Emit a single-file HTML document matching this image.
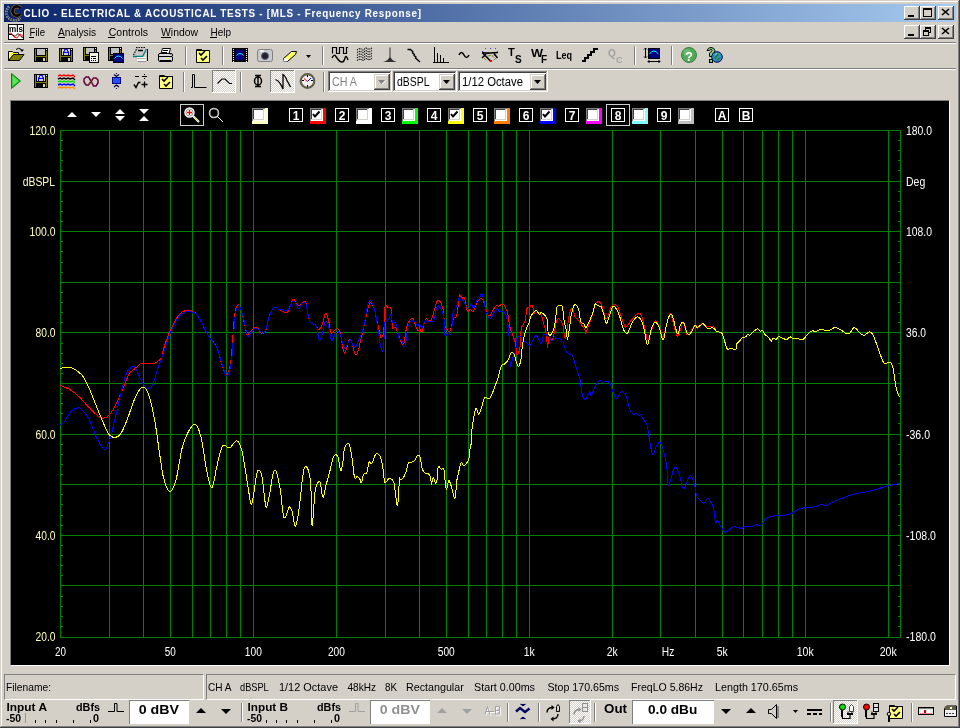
<!DOCTYPE html>
<html><head><meta charset="utf-8"><style>
*{margin:0;padding:0;box-sizing:border-box}
html,body{width:960px;height:728px;overflow:hidden;background:#d4d0c8;font-family:"Liberation Sans", sans-serif;font-size:11px;color:#000}
.a{position:absolute}
</style></head><body>
<div class="a" style="left:0px;top:0px;width:960px;height:728px;background:#d4d0c8;"></div><div class="a" style="left:1px;top:1px;width:957px;height:1px;background:#fff;"></div><div class="a" style="left:1px;top:1px;width:1px;height:725px;background:#fff;"></div><div class="a" style="left:958px;top:1px;width:1px;height:726px;background:#808080;"></div><div class="a" style="left:1px;top:726px;width:958px;height:1px;background:#808080;"></div><div class="a" style="left:959px;top:0px;width:1px;height:728px;background:#404040;"></div><div class="a" style="left:0px;top:727px;width:960px;height:1px;background:#404040;"></div><div class="a" style="left:4px;top:4px;width:952px;height:18px;background:linear-gradient(to right,#0a246a,#a6caf0);"></div><div class="a" style="left:4px;top:42px;width:952px;height:1px;background:#808080;"></div><div class="a" style="left:4px;top:43px;width:952px;height:1px;background:#fff;"></div><div class="a" style="left:4px;top:68px;width:952px;height:1px;background:#808080;"></div><div class="a" style="left:4px;top:69px;width:952px;height:1px;background:#fff;"></div><div class="a" style="left:10px;top:100px;width:940px;height:566px;background:#000;border-top:1px solid #808080;border-left:1px solid #808080;border-right:1px solid #fff;border-bottom:1px solid #fff"></div><div class="a" style="left:4px;top:674px;width:200px;height:26px;background:#d4d0c8;border-top:1px solid #808080;border-left:1px solid #808080;border-right:1px solid #fff;border-bottom:1px solid #fff"></div><div class="a" style="left:206px;top:674px;width:750px;height:26px;background:#d4d0c8;border-top:1px solid #808080;border-left:1px solid #808080;border-right:1px solid #fff;border-bottom:1px solid #fff"></div>
<svg width="960" height="728" style="position:absolute;left:0;top:0;will-change:transform">
<path d="M60.5 130V638M109.5 130V638M143.5 130V638M170.5 130V638M192.5 130V638M210.5 130V638M226.5 130V638M240.5 130V638M253.5 130V638M336.5 130V638M385.5 130V638M419.5 130V638M446.5 130V638M468.5 130V638M486.5 130V638M502.5 130V638M516.5 130V638M529.5 130V638M612.5 130V638M660.5 130V638M695.5 130V638M722.5 130V638M743.5 130V638M762.5 130V638M778.5 130V638M792.5 130V638M805.5 130V638M888.5 130V638M900.5 130V638M60 130.5H901M60 181.5H901M60 231.5H901M60 282.5H901M60 332.5H901M60 383.5H901M60 434.5H901M60 484.5H901M60 535.5H901M60 585.5H901M60 637.5H901M60 130.5h3M898 130.5h3M60 140.5h3M898 140.5h3M60 150.5h3M898 150.5h3M60 160.5h3M898 160.5h3M60 170.5h3M898 170.5h3M60 181.5h3M898 181.5h3M60 191.5h3M898 191.5h3M60 201.5h3M898 201.5h3M60 211.5h3M898 211.5h3M60 221.5h3M898 221.5h3M60 231.5h3M898 231.5h3M60 241.5h3M898 241.5h3M60 251.5h3M898 251.5h3M60 262.5h3M898 262.5h3M60 272.5h3M898 272.5h3M60 282.5h3M898 282.5h3M60 292.5h3M898 292.5h3M60 302.5h3M898 302.5h3M60 312.5h3M898 312.5h3M60 322.5h3M898 322.5h3M60 332.5h3M898 332.5h3M60 343.5h3M898 343.5h3M60 353.5h3M898 353.5h3M60 363.5h3M898 363.5h3M60 373.5h3M898 373.5h3M60 383.5h3M898 383.5h3M60 393.5h3M898 393.5h3M60 403.5h3M898 403.5h3M60 413.5h3M898 413.5h3M60 423.5h3M898 423.5h3M60 434.5h3M898 434.5h3M60 444.5h3M898 444.5h3M60 454.5h3M898 454.5h3M60 464.5h3M898 464.5h3M60 474.5h3M898 474.5h3M60 484.5h3M898 484.5h3M60 494.5h3M898 494.5h3M60 504.5h3M898 504.5h3M60 515.5h3M898 515.5h3M60 525.5h3M898 525.5h3M60 535.5h3M898 535.5h3M60 545.5h3M898 545.5h3M60 555.5h3M898 555.5h3M60 565.5h3M898 565.5h3M60 575.5h3M898 575.5h3M60 585.5h3M898 585.5h3M60 596.5h3M898 596.5h3M60 606.5h3M898 606.5h3M60 616.5h3M898 616.5h3M60 626.5h3M898 626.5h3" stroke="#008000" stroke-width="1" fill="none" shape-rendering="crispEdges"/>
<path d="M60.06 385.22C60.86 385.56 62.92 386.36 64.87 387.28C66.81 388.20 69.22 389.00 71.74 390.71C74.25 392.43 77.69 395.41 79.98 397.58C82.27 399.76 83.87 402.05 85.47 403.76C87.08 405.48 87.99 406.28 89.59 407.88C91.20 409.49 93.03 411.66 95.09 413.38C97.15 415.10 99.78 417.73 101.96 418.19C104.13 418.64 106.31 417.50 108.14 416.13C109.97 414.75 111.23 412.81 112.95 409.95C114.66 407.08 116.61 402.96 118.44 398.96C120.27 394.95 122.10 390.14 123.93 385.91C125.77 381.67 127.60 376.41 129.43 373.54C131.26 370.68 133.09 370.34 134.92 368.74C136.75 367.13 138.59 364.84 140.42 363.93C142.25 363.01 144.08 363.31 145.91 363.24C147.74 363.17 149.58 363.70 151.41 363.52C153.24 363.33 155.07 363.33 156.90 362.14C158.73 360.95 161.36 358.33 162.40 356.37C163.43 354.42 161.80 354.66 163.10 350.40C164.40 346.14 167.53 336.75 170.20 330.80C172.87 324.85 176.12 318.10 179.10 314.70C182.08 311.30 185.12 310.40 188.10 310.40C191.08 310.40 193.73 310.70 197.00 314.70C200.27 318.70 204.45 329.02 207.70 334.40C210.95 339.78 214.12 341.95 216.50 347.00C218.88 352.05 220.37 360.08 222.00 364.70C223.63 369.32 224.82 375.32 226.30 374.70C227.78 374.08 229.53 370.70 230.90 361.00C232.27 351.30 233.30 325.88 234.50 316.50C235.70 307.12 236.78 305.00 238.10 304.70C239.42 304.40 240.92 309.75 242.40 314.70C243.88 319.65 245.82 331.42 247.00 334.40C248.18 337.38 248.18 333.80 249.50 332.60C250.82 331.40 253.40 327.80 254.90 327.20C256.40 326.60 257.65 328.20 258.50 329.00C259.35 329.80 259.23 331.17 260.00 332.00C260.77 332.83 262.06 334.50 263.10 334.00C264.14 333.50 265.42 331.33 266.25 329.00C267.08 326.67 267.38 322.65 268.10 320.00C268.83 317.35 269.77 315.08 270.60 313.10C271.43 311.12 272.16 309.03 273.10 308.10C274.04 307.17 275.31 307.28 276.25 307.50C277.19 307.72 277.71 308.77 278.75 309.40C279.79 310.02 281.36 310.73 282.50 311.25C283.64 311.77 284.67 312.50 285.60 312.50C286.53 312.50 286.85 313.43 288.10 311.25C289.35 309.07 291.74 300.77 293.10 299.40C294.46 298.02 295.20 301.97 296.25 303.00C297.30 304.03 298.15 305.89 299.40 305.60C300.65 305.31 302.61 301.52 303.75 301.25C304.89 300.98 305.52 301.81 306.25 304.00C306.98 306.19 307.48 311.42 308.10 314.40C308.73 317.38 309.27 320.34 310.00 321.90C310.73 323.46 311.57 323.13 312.50 323.75C313.43 324.37 314.56 324.66 315.60 325.60C316.64 326.54 317.70 329.40 318.75 329.40C319.80 329.40 320.76 328.32 321.90 325.60C323.04 322.88 324.46 313.83 325.60 313.10C326.74 312.38 327.81 317.92 328.75 321.25C329.69 324.58 330.00 331.85 331.25 333.10C332.50 334.35 334.79 328.95 336.25 328.75C337.71 328.55 338.64 327.84 340.00 331.90C341.36 335.96 342.73 351.96 344.40 353.10C346.07 354.24 348.02 338.43 350.00 338.75C351.98 339.07 354.17 356.04 356.25 355.00C358.33 353.96 360.62 340.00 362.50 332.50C364.38 325.00 366.25 314.90 367.50 310.00C368.75 305.10 368.96 303.54 370.00 303.12C371.04 302.71 372.19 302.81 373.75 307.50C375.31 312.19 378.12 326.15 379.38 331.25C380.62 336.35 380.52 338.23 381.25 338.12C381.98 338.02 383.12 335.73 383.75 330.62C384.38 325.52 384.27 311.35 385.00 307.50C385.73 303.65 387.08 307.19 388.12 307.50C389.17 307.81 390.52 306.04 391.25 309.38C391.98 312.71 391.77 324.48 392.50 327.50C393.23 330.52 394.69 326.46 395.62 327.50C396.56 328.54 397.19 331.25 398.12 333.75C399.06 336.25 400.31 340.83 401.25 342.50C402.19 344.17 402.81 346.46 403.75 343.75C404.69 341.04 405.73 330.31 406.88 326.25C408.02 322.19 409.58 320.62 410.62 319.38C411.67 318.12 412.19 317.40 413.12 318.75C414.06 320.10 415.42 325.52 416.25 327.50C417.08 329.48 417.50 330.42 418.12 330.62C418.75 330.83 419.38 328.54 420.00 328.75C420.62 328.96 420.94 333.44 421.88 331.88C422.81 330.31 424.48 321.25 425.62 319.38C426.77 317.50 427.71 320.73 428.75 320.62C429.79 320.52 430.42 322.08 431.88 318.75C433.33 315.42 435.73 302.60 437.50 300.62C439.27 298.65 441.35 303.44 442.50 306.88C443.65 310.31 443.85 317.81 444.38 321.25C444.90 324.69 444.69 325.83 445.62 327.50C446.56 329.17 448.75 332.60 450.00 331.25C451.25 329.90 451.98 322.08 453.12 319.38C454.27 316.67 455.83 318.96 456.88 315.00C457.92 311.04 458.54 298.44 459.38 295.62C460.21 292.81 461.04 297.71 461.88 298.12C462.71 298.54 463.44 295.94 464.38 298.12C465.31 300.31 466.56 309.38 467.50 311.25C468.44 313.12 469.06 309.38 470.00 309.38C470.94 309.38 471.98 312.40 473.12 311.25C474.27 310.10 475.83 304.48 476.88 302.50C477.92 300.52 478.85 300.10 479.38 299.38C479.90 298.65 479.48 298.12 480.00 298.12C480.52 298.12 481.56 297.81 482.50 299.38C483.44 300.94 484.90 305.21 485.62 307.50C486.35 309.79 486.15 311.77 486.88 313.12C487.60 314.48 488.96 316.15 490.00 315.62C491.04 315.10 492.08 311.67 493.12 310.00C494.17 308.33 495.31 306.25 496.25 305.62C497.19 305.00 497.92 306.46 498.75 306.25C499.58 306.04 500.42 304.62 501.25 304.38C502.08 304.12 502.81 303.71 503.75 304.75C504.69 305.79 506.15 308.81 506.88 310.62C507.60 312.44 507.60 312.81 508.12 315.62C508.65 318.44 509.27 324.38 510.00 327.50C510.73 330.62 511.56 331.67 512.50 334.38C513.44 337.08 514.90 340.31 515.62 343.75C516.35 347.19 516.15 354.38 516.88 355.00C517.60 355.62 519.27 351.88 520.00 347.50C520.73 343.12 520.42 333.12 521.25 328.75C522.08 324.38 524.06 324.58 525.00 321.25C525.94 317.92 526.15 311.15 526.88 308.75C527.60 306.35 528.44 307.40 529.38 306.88C530.31 306.35 531.77 304.58 532.50 305.62C533.23 306.67 533.12 312.29 533.75 313.12C534.38 313.96 535.42 310.52 536.25 310.62C537.08 310.73 537.92 313.02 538.75 313.75C539.58 314.48 540.42 313.33 541.25 315.00C542.08 316.67 542.92 320.73 543.75 323.75C544.58 326.77 545.62 329.17 546.25 333.12C546.88 337.08 547.08 346.77 547.50 347.50C547.92 348.23 548.33 339.06 548.75 337.50C549.17 335.94 549.38 337.71 550.00 338.12C550.62 338.54 551.67 341.56 552.50 340.00C553.33 338.44 554.27 332.08 555.00 328.75C555.73 325.42 556.15 321.56 556.88 320.00C557.60 318.44 558.44 318.75 559.38 319.38C560.31 320.00 561.56 320.62 562.50 323.75C563.44 326.88 564.27 336.88 565.00 338.12C565.73 339.38 566.15 335.31 566.88 331.25C567.60 327.19 568.44 317.50 569.38 313.75C570.31 310.00 571.56 308.23 572.50 308.75C573.44 309.27 574.17 315.10 575.00 316.88C575.83 318.65 576.67 318.44 577.50 319.38C578.33 320.31 578.75 320.73 580.00 322.50C581.25 324.27 584.06 328.12 585.00 330.00C585.94 331.88 585.00 334.58 585.62 333.75C586.25 332.92 587.60 328.12 588.75 325.00C589.90 321.88 591.35 318.54 592.50 315.00C593.65 311.46 594.48 305.94 595.62 303.75C596.77 301.56 598.33 301.56 599.38 301.88C600.42 302.19 600.73 302.81 601.88 305.62C603.02 308.44 604.69 318.54 606.25 318.75C607.81 318.96 609.79 309.27 611.25 306.88C612.71 304.48 613.85 304.27 615.00 304.38C616.15 304.48 616.67 304.27 618.12 307.50C619.58 310.73 622.40 320.52 623.75 323.75C625.10 326.98 624.79 327.71 626.25 326.88C627.71 326.04 630.42 321.04 632.50 318.75C634.58 316.46 637.19 313.44 638.75 313.12C640.31 312.81 640.83 314.27 641.88 316.88C642.92 319.48 643.96 325.00 645.00 328.75C646.04 332.50 646.46 340.62 648.12 339.38C649.79 338.12 653.02 323.02 655.00 321.25C656.98 319.48 658.65 326.15 660.00 328.75C661.35 331.35 661.67 338.85 663.12 336.88C664.58 334.90 667.40 320.42 668.75 316.88C670.10 313.33 669.79 312.40 671.25 315.62C672.71 318.85 675.52 335.10 677.50 336.25C679.48 337.40 681.46 322.71 683.12 322.50C684.79 322.29 685.52 334.58 687.50 335.00C689.48 335.42 693.33 326.15 695.00 325.00C696.67 323.85 696.25 328.44 697.50 328.12C698.75 327.81 700.83 323.33 702.50 323.12C704.17 322.92 705.83 326.35 707.50 326.88C709.17 327.40 711.25 326.04 712.50 326.25C713.75 326.46 714.38 327.29 715.00 328.12C715.62 328.96 715.83 330.62 716.25 331.25C716.67 331.88 716.67 331.67 717.50 331.88C718.33 332.08 720.31 331.77 721.25 332.50C722.19 333.23 722.50 334.58 723.12 336.25C723.75 337.92 724.27 340.31 725.00 342.50C725.73 344.69 726.56 348.44 727.50 349.38C728.44 350.31 729.27 348.12 730.62 348.12C731.98 348.12 734.58 350.10 735.62 349.38C736.67 348.65 736.25 345.10 736.88 343.75C737.50 342.40 738.44 342.29 739.38 341.25C740.31 340.21 741.46 338.23 742.50 337.50C743.54 336.77 744.79 337.40 745.62 336.88C746.46 336.35 746.77 334.69 747.50 334.38C748.23 334.06 749.06 335.42 750.00 335.00C750.94 334.58 751.88 332.92 753.12 331.88C754.38 330.83 756.35 328.85 757.50 328.75C758.65 328.65 759.17 330.94 760.00 331.25C760.83 331.56 761.67 330.10 762.50 330.62C763.33 331.15 763.96 333.23 765.00 334.38C766.04 335.52 767.71 336.35 768.75 337.50C769.79 338.65 770.52 341.15 771.25 341.25C771.98 341.35 772.29 338.44 773.12 338.12C773.96 337.81 775.31 339.69 776.25 339.38C777.19 339.06 777.81 336.46 778.75 336.25C779.69 336.04 780.52 337.60 781.88 338.12C783.23 338.65 785.52 339.58 786.88 339.38C788.23 339.17 789.06 337.08 790.00 336.88C790.94 336.67 791.25 337.92 792.50 338.12C793.75 338.33 796.35 337.92 797.50 338.12C798.65 338.33 798.44 339.17 799.38 339.38C800.31 339.58 802.08 339.79 803.12 339.38C804.17 338.96 804.90 337.71 805.62 336.88C806.35 336.04 806.35 335.42 807.50 334.38C808.65 333.33 811.25 331.04 812.50 330.62C813.75 330.21 813.96 331.98 815.00 331.88C816.04 331.77 817.71 330.42 818.75 330.00C819.79 329.58 820.42 329.38 821.25 329.38C822.08 329.38 822.29 329.90 823.75 330.00C825.21 330.10 828.12 330.42 830.00 330.00C831.88 329.58 833.17 327.50 835.00 327.50C836.83 327.50 839.10 328.98 841.00 330.00C842.90 331.02 844.90 333.12 846.40 333.60C847.90 334.08 848.68 333.92 850.00 332.90C851.32 331.88 852.82 327.68 854.30 327.50C855.78 327.32 857.35 330.48 858.90 331.80C860.45 333.12 861.82 335.40 863.60 335.40C865.38 335.40 868.00 331.80 869.60 331.80C871.20 331.80 871.70 332.43 873.20 335.40C874.70 338.37 876.82 345.02 878.60 349.60C880.38 354.18 882.00 360.82 883.90 362.90C885.80 364.98 888.50 361.33 890.00 362.10C891.50 362.87 891.95 363.62 892.90 367.50C893.85 371.38 894.82 380.93 895.70 385.40C896.58 389.87 897.48 392.37 898.20 394.30C898.92 396.23 899.70 396.55 900.00 397.00" stroke="#ff0000" stroke-width="1" fill="none" shape-rendering="crispEdges"/>
<path d="M60.06 425.05C60.86 424.37 63.04 423.22 64.87 420.93C66.70 418.64 68.99 413.49 71.05 411.32C73.11 409.14 75.63 408.34 77.23 407.88C78.83 407.43 79.06 407.31 80.66 408.57C82.27 409.83 85.01 412.69 86.85 415.44C88.68 418.19 90.05 421.39 91.65 425.05C93.26 428.72 94.40 433.41 96.46 437.42C98.52 441.42 102.18 447.72 104.02 449.09C105.85 450.47 106.19 448.29 107.45 445.66C108.71 443.03 109.97 439.25 111.57 433.30C113.17 427.34 115.23 417.73 117.07 409.95C118.90 402.16 120.96 392.77 122.56 386.59C124.16 380.41 125.08 376.18 126.68 372.86C128.28 369.54 130.69 367.36 132.18 366.68C133.66 365.99 133.78 365.87 135.61 368.74C137.44 371.60 140.99 380.53 143.16 383.85C145.34 387.17 147.06 388.54 148.66 388.65C150.26 388.77 151.41 387.39 152.78 384.53C154.15 381.67 155.30 376.29 156.90 371.48C158.50 366.68 160.10 362.30 162.40 355.69C164.70 349.07 167.83 338.46 170.70 331.80C173.57 325.14 176.62 319.10 179.60 315.70C182.58 312.30 185.62 311.40 188.60 311.40C191.58 311.40 194.23 311.70 197.50 315.70C200.77 319.70 204.95 330.02 208.20 335.40C211.45 340.78 214.62 342.95 217.00 348.00C219.38 353.05 220.87 361.08 222.50 365.70C224.13 370.32 225.32 376.32 226.80 375.70C228.28 375.08 230.03 371.70 231.40 362.00C232.77 352.30 233.80 326.88 235.00 317.50C236.20 308.12 237.28 306.00 238.60 305.70C239.92 305.40 241.42 310.75 242.90 315.70C244.38 320.65 246.32 332.42 247.50 335.40C248.68 338.38 248.68 334.80 250.00 333.60C251.32 332.40 253.90 328.80 255.40 328.20C256.90 327.60 258.23 329.49 259.00 330.00C259.77 330.51 259.31 330.73 260.00 331.25C260.69 331.77 262.08 333.54 263.12 333.12C264.17 332.71 265.42 330.94 266.25 328.75C267.08 326.56 267.40 322.60 268.12 320.00C268.85 317.40 269.79 315.10 270.62 313.12C271.46 311.15 272.19 309.06 273.12 308.12C274.06 307.19 275.31 307.29 276.25 307.50C277.19 307.71 277.71 309.06 278.75 309.38C279.79 309.69 281.25 309.17 282.50 309.38C283.75 309.58 285.10 310.83 286.25 310.62C287.40 310.42 288.23 309.79 289.38 308.12C290.52 306.46 291.98 301.25 293.12 300.62C294.27 300.00 295.31 303.02 296.25 304.38C297.19 305.73 297.81 308.85 298.75 308.75C299.69 308.65 300.94 304.79 301.88 303.75C302.81 302.71 303.65 302.29 304.38 302.50C305.10 302.71 305.62 303.02 306.25 305.00C306.88 306.98 307.50 311.56 308.12 314.38C308.75 317.19 309.27 320.31 310.00 321.88C310.73 323.44 311.56 323.23 312.50 323.75C313.44 324.27 314.79 323.96 315.62 325.00C316.46 326.04 316.88 327.50 317.50 330.00C318.12 332.50 318.65 339.06 319.38 340.00C320.10 340.94 320.94 338.54 321.88 335.62C322.81 332.71 323.96 324.38 325.00 322.50C326.04 320.62 327.08 321.46 328.12 324.38C329.17 327.29 330.31 337.92 331.25 340.00C332.19 342.08 332.81 338.23 333.75 336.88C334.69 335.52 335.83 332.40 336.88 331.88C337.92 331.35 339.06 331.98 340.00 333.75C340.94 335.52 341.67 340.00 342.50 342.50C343.33 345.00 344.06 348.75 345.00 348.75C345.94 348.75 347.19 343.96 348.12 342.50C349.06 341.04 349.69 339.27 350.62 340.00C351.56 340.73 352.81 345.83 353.75 346.88C354.69 347.92 355.42 347.50 356.25 346.25C357.08 345.00 357.81 341.56 358.75 339.38C359.69 337.19 360.83 336.35 361.88 333.12C362.92 329.90 364.06 324.48 365.00 320.00C365.94 315.52 366.67 309.48 367.50 306.25C368.33 303.02 369.17 301.04 370.00 300.62C370.83 300.21 371.56 301.56 372.50 303.75C373.44 305.94 374.90 310.62 375.62 313.75C376.35 316.88 376.25 318.33 376.88 322.50C377.50 326.67 378.75 334.79 379.38 338.75C380.00 342.71 380.10 344.17 380.62 346.25C381.15 348.33 381.98 351.67 382.50 351.25C383.02 350.83 383.33 348.54 383.75 343.75C384.17 338.96 384.48 326.25 385.00 322.50C385.52 318.75 386.15 322.08 386.88 321.25C387.60 320.42 388.65 318.65 389.38 317.50C390.10 316.35 390.73 313.54 391.25 314.38C391.77 315.21 391.77 321.04 392.50 322.50C393.23 323.96 394.79 321.88 395.62 323.12C396.46 324.38 396.98 327.60 397.50 330.00C398.02 332.40 398.02 335.62 398.75 337.50C399.48 339.38 400.94 339.69 401.88 341.25C402.81 342.81 403.65 347.08 404.38 346.88C405.10 346.67 405.73 343.12 406.25 340.00C406.77 336.88 406.88 331.15 407.50 328.12C408.12 325.10 409.17 323.23 410.00 321.88C410.83 320.52 411.67 320.00 412.50 320.00C413.33 320.00 414.17 320.83 415.00 321.88C415.83 322.92 416.77 325.94 417.50 326.25C418.23 326.56 418.65 323.44 419.38 323.75C420.10 324.06 420.94 328.54 421.88 328.12C422.81 327.71 423.96 322.40 425.00 321.25C426.04 320.10 426.67 321.35 428.12 321.25C429.58 321.15 432.29 323.02 433.75 320.62C435.21 318.23 435.73 308.96 436.88 306.88C438.02 304.79 439.48 306.56 440.62 308.12C441.77 309.69 443.02 311.77 443.75 316.25C444.48 320.73 444.27 332.29 445.00 335.00C445.73 337.71 447.08 332.81 448.12 332.50C449.17 332.19 450.42 336.46 451.25 333.12C452.08 329.79 452.29 316.77 453.12 312.50C453.96 308.23 455.21 310.00 456.25 307.50C457.29 305.00 458.23 298.65 459.38 297.50C460.52 296.35 461.98 299.17 463.12 300.62C464.27 302.08 465.31 304.90 466.25 306.25C467.19 307.60 467.92 309.17 468.75 308.75C469.58 308.33 470.42 303.85 471.25 303.75C472.08 303.65 472.81 308.65 473.75 308.12C474.69 307.60 475.94 302.19 476.88 300.62C477.81 299.06 478.65 299.90 479.38 298.75C480.10 297.60 480.52 293.65 481.25 293.75C481.98 293.85 482.92 296.25 483.75 299.38C484.58 302.50 485.10 309.38 486.25 312.50C487.40 315.62 489.27 318.23 490.62 318.12C491.98 318.02 493.23 313.44 494.38 311.88C495.52 310.31 496.77 308.85 497.50 308.75C498.23 308.65 497.92 310.73 498.75 311.25C499.58 311.77 501.25 311.15 502.50 311.88C503.75 312.60 505.21 312.40 506.25 315.62C507.29 318.85 508.23 325.52 508.75 331.25C509.27 336.98 509.06 344.17 509.38 350.00C509.69 355.83 510.00 365.21 510.62 366.25C511.25 367.29 512.29 358.75 513.12 356.25C513.96 353.75 515.00 354.17 515.62 351.25C516.25 348.33 516.25 341.25 516.88 338.75C517.50 336.25 518.65 336.46 519.38 336.25C520.10 336.04 520.73 336.46 521.25 337.50C521.77 338.54 521.88 341.88 522.50 342.50C523.12 343.12 524.27 341.15 525.00 341.25C525.73 341.35 526.04 342.40 526.88 343.12C527.71 343.85 529.06 345.94 530.00 345.62C530.94 345.31 531.56 342.92 532.50 341.25C533.44 339.58 534.69 336.15 535.62 335.62C536.56 335.10 537.19 336.77 538.12 338.12C539.06 339.48 540.31 344.38 541.25 343.75C542.19 343.12 543.02 335.73 543.75 334.38C544.48 333.02 544.90 335.73 545.62 335.62C546.35 335.52 547.29 333.12 548.12 333.75C548.96 334.38 549.90 338.23 550.62 339.38C551.35 340.52 551.88 341.04 552.50 340.62C553.12 340.21 553.75 337.19 554.38 336.88C555.00 336.56 555.31 338.44 556.25 338.75C557.19 339.06 558.85 338.12 560.00 338.75C561.15 339.38 562.08 340.42 563.12 342.50C564.17 344.58 565.31 349.38 566.25 351.25C567.19 353.12 567.71 353.02 568.75 353.75C569.79 354.48 571.46 353.96 572.50 355.62C573.54 357.29 573.96 360.52 575.00 363.75C576.04 366.98 577.92 372.40 578.75 375.00C579.58 377.60 579.70 377.85 580.00 379.38C580.30 380.90 580.10 381.36 580.57 384.17C581.05 386.98 581.96 393.74 582.84 396.25C583.72 398.77 584.73 400.03 585.86 399.27C586.99 398.52 588.76 392.35 589.64 391.72C590.52 391.09 590.27 396.25 591.15 395.50C592.03 394.74 593.54 389.71 594.92 387.19C596.31 384.67 598.20 381.15 599.46 380.39C600.72 379.64 601.34 382.53 602.48 382.66C603.61 382.78 604.99 381.02 606.25 381.15C607.51 381.27 608.90 381.65 610.03 383.41C611.16 385.18 612.04 389.20 613.05 391.72C614.06 394.24 614.81 398.39 616.07 398.52C617.33 398.65 619.35 393.48 620.60 392.48C621.86 391.47 622.62 391.60 623.63 392.48C624.63 393.36 625.64 394.99 626.65 397.76C627.65 400.53 628.53 406.32 629.67 409.09C630.80 411.86 632.31 413.63 633.44 414.38C634.58 415.14 635.58 413.37 636.47 413.63C637.35 413.88 637.98 415.64 638.73 415.89C639.49 416.14 640.12 414.38 641.00 415.14C641.88 415.89 643.01 418.79 644.02 420.42C645.03 422.06 646.28 422.69 647.04 424.95C647.79 427.22 647.92 430.24 648.55 434.02C649.18 437.79 650.06 444.09 650.82 447.61C651.57 451.14 652.20 455.29 653.08 455.17C653.96 455.04 655.10 449.00 656.10 446.86C657.11 444.72 658.24 442.70 659.12 442.33C660.01 441.95 660.51 442.58 661.39 444.59C662.27 446.61 663.53 450.89 664.41 454.41C665.29 457.94 665.98 460.58 666.68 465.74C667.37 470.91 667.28 485.11 668.60 485.40C669.92 485.69 672.82 469.30 674.60 467.50C676.38 465.70 677.80 471.02 679.30 474.60C680.80 478.18 681.82 488.82 683.60 489.00C685.38 489.18 688.21 476.54 690.00 475.70C691.79 474.86 693.27 480.75 694.34 483.96C695.41 487.16 695.60 492.43 696.40 494.95C697.20 497.46 697.89 497.69 699.15 499.07C700.41 500.44 702.70 503.19 703.96 503.19C705.22 503.19 705.79 499.64 706.70 499.07C707.62 498.49 708.31 498.15 709.45 499.75C710.60 501.36 712.54 504.79 713.57 508.68C714.60 512.57 715.06 521.16 715.63 523.10C716.20 525.05 715.98 519.56 717.01 520.36C718.04 521.16 720.55 525.97 721.81 527.91C723.07 529.86 723.42 531.58 724.56 532.03C725.71 532.49 727.19 531.58 728.68 530.66C730.17 529.74 732.12 527.11 733.49 526.54C734.86 525.97 735.66 526.88 736.92 527.23C738.18 527.57 739.67 528.71 741.04 528.60C742.42 528.48 743.33 526.93 745.16 526.54C747.00 526.15 750.20 526.61 752.03 526.26C753.86 525.92 754.89 524.62 756.15 524.48C757.41 524.34 758.56 525.55 759.59 525.44C760.62 525.33 761.30 524.94 762.34 523.79C763.37 522.65 764.28 519.78 765.77 518.57C767.26 517.36 769.20 517.06 771.26 516.51C773.32 515.96 776.68 515.41 778.13 515.27C779.59 515.14 777.91 515.93 780.00 515.70C782.09 515.47 787.37 515.08 790.70 513.90C794.03 512.72 796.07 509.78 800.00 508.60C803.93 507.42 810.73 507.52 814.30 506.80C817.87 506.08 819.62 504.48 821.40 504.30C823.18 504.12 822.62 506.30 825.00 505.70C827.38 505.10 830.93 502.60 835.70 500.70C840.47 498.80 847.65 495.97 853.60 494.30C859.55 492.63 865.45 492.18 871.40 490.70C877.35 489.22 884.53 486.58 889.30 485.40C894.07 484.22 898.22 483.90 900.00 483.60" stroke="#0000ff" stroke-width="1" fill="none" shape-rendering="crispEdges"/>
<path d="M60.06 368.32C61.09 368.16 64.18 367.41 66.24 367.36C68.30 367.32 70.36 367.25 72.42 368.05C74.48 368.85 76.77 370.68 78.60 372.17C80.44 373.66 81.58 374.12 83.41 376.98C85.24 379.84 87.65 384.99 89.59 389.34C91.54 393.69 93.03 398.04 95.09 403.08C97.15 408.11 99.78 414.52 101.96 419.56C104.13 424.60 106.08 430.32 108.14 433.30C110.20 436.27 112.26 437.30 114.32 437.42C116.38 437.53 118.44 436.73 120.50 433.98C122.56 431.24 124.51 426.31 126.68 420.93C128.86 415.55 131.37 406.97 133.55 401.70C135.72 396.44 138.13 391.74 139.73 389.34C141.33 386.94 142.02 387.17 143.16 387.28C144.31 387.39 145.45 388.08 146.60 390.03C147.74 391.97 148.66 393.80 150.03 398.96C151.41 404.11 153.24 411.78 154.84 420.93C156.44 430.09 158.19 444.39 159.65 453.90C161.11 463.41 161.94 471.75 163.60 478.00C165.26 484.25 167.53 491.07 169.60 491.40C171.67 491.73 173.73 487.90 176.00 480.00C178.27 472.10 180.20 453.23 183.20 444.00C186.20 434.77 191.03 425.77 194.00 424.60C196.97 423.43 198.93 429.60 201.00 437.00C203.07 444.40 204.60 460.52 206.40 469.00C208.20 477.48 210.03 488.45 211.80 487.90C213.57 487.35 215.22 472.68 217.00 465.70C218.78 458.72 220.40 448.97 222.50 446.00C224.60 443.03 227.22 448.78 229.60 447.90C231.98 447.02 234.73 440.18 236.80 440.70C238.87 441.22 240.22 443.85 242.00 451.00C243.78 458.15 246.00 474.77 247.50 483.60C249.00 492.43 249.98 502.22 251.00 504.00C252.02 505.78 252.60 499.48 253.60 494.30C254.60 489.12 255.93 476.78 257.00 472.90C258.07 469.02 259.08 469.82 260.00 471.00C260.92 472.18 261.50 474.03 262.50 480.00C263.50 485.97 264.82 504.42 266.00 506.80C267.18 509.18 268.40 499.95 269.60 494.30C270.80 488.65 272.00 476.47 273.20 472.90C274.40 469.33 275.60 469.93 276.80 472.90C278.00 475.87 279.20 483.27 280.40 490.70C281.60 498.13 282.52 514.82 284.00 517.50C285.48 520.18 288.30 508.45 289.30 506.80C290.30 505.15 289.54 506.90 290.00 507.61C290.46 508.32 291.26 508.07 292.06 511.04C292.86 514.02 294.01 523.64 294.81 525.47C295.61 527.30 296.07 525.58 296.87 522.03C297.67 518.48 298.70 511.27 299.62 504.18C300.53 497.08 301.56 485.52 302.36 479.45C303.16 473.38 303.62 469.72 304.42 467.77C305.22 465.83 306.37 466.74 307.17 467.77C307.97 468.80 308.66 471.32 309.23 473.96C309.80 476.59 310.26 479.68 310.60 483.57C310.95 487.46 311.06 490.44 311.29 497.31C311.52 504.18 311.63 522.03 311.98 524.78C312.32 527.53 312.89 518.83 313.35 513.79C313.81 508.75 314.27 499.14 314.73 494.56C315.18 489.98 315.53 488.38 316.10 486.32C316.67 484.26 317.47 482.77 318.16 482.20C318.85 481.63 319.42 480.37 320.22 482.88C321.02 485.40 322.05 496.74 322.97 497.31C323.88 497.88 324.57 490.67 325.71 486.32C326.86 481.97 328.69 475.67 329.84 471.21C330.98 466.74 331.67 462.28 332.58 459.53C333.50 456.79 334.41 455.07 335.33 454.73C336.25 454.38 337.16 454.84 338.08 457.47C338.99 460.11 340.02 469.84 340.82 470.52C341.63 471.21 342.31 465.03 342.88 461.59C343.46 458.16 343.57 452.89 344.26 449.92C344.95 446.94 346.09 444.42 347.01 443.74C347.92 443.05 348.84 442.82 349.75 445.80C350.67 448.77 351.70 456.33 352.50 461.59C353.30 466.86 353.76 474.87 354.56 477.39C355.36 479.91 356.39 476.36 357.31 476.70C358.22 477.05 359.37 478.42 360.05 479.45C360.74 480.48 360.86 483.69 361.43 482.88C362.00 482.08 362.57 476.36 363.49 474.64C364.40 472.93 366.01 474.64 366.92 472.58C367.84 470.52 368.18 463.77 368.98 462.28C369.78 460.79 370.59 465.03 371.73 463.65C372.88 462.28 374.48 455.30 375.85 454.04C377.23 452.78 378.83 454.04 379.97 456.10C381.12 458.16 381.92 462.05 382.72 466.40C383.52 470.75 383.75 480.14 384.78 482.20C385.81 484.26 387.41 478.76 388.90 478.76C390.39 478.76 392.45 478.42 393.71 482.20C394.97 485.98 395.77 497.77 396.46 501.43C397.14 505.09 397.34 507.84 397.83 504.18C398.32 500.51 399.05 483.57 399.40 479.45C399.74 475.33 399.36 479.57 399.89 479.45C400.42 479.34 401.54 480.02 402.55 478.76C403.57 477.50 405.07 474.41 405.99 471.90C406.90 469.38 407.25 465.26 408.05 463.65C408.85 462.05 409.77 462.74 410.80 462.28C411.83 461.82 413.09 462.05 414.23 460.91C415.38 459.76 416.63 455.87 417.66 455.41C418.70 454.95 419.73 456.10 420.41 458.16C421.10 460.22 420.98 465.26 421.79 467.77C422.59 470.29 424.08 472.24 425.22 473.27C426.36 474.30 427.74 473.15 428.65 473.96C429.57 474.76 430.26 476.25 430.71 478.08C431.17 479.91 430.99 485.06 431.40 484.95C431.81 484.83 432.50 477.73 433.19 477.39C433.87 477.05 434.90 482.31 435.52 482.88C436.14 483.46 436.44 483.46 436.90 480.82C437.35 478.19 437.58 469.03 438.27 467.09C438.96 465.14 440.10 468.80 441.02 469.15C441.93 469.49 443.08 467.20 443.76 469.15C444.45 471.09 444.68 477.39 445.14 480.82C445.60 484.26 445.94 489.75 446.51 489.75C447.08 489.75 447.88 481.74 448.57 480.82C449.26 479.91 449.95 482.43 450.63 484.26C451.32 486.09 451.94 489.52 452.69 491.81C453.45 494.10 454.48 499.83 455.16 497.99C455.85 496.16 456.31 484.72 456.81 480.82C457.32 476.93 457.50 477.62 458.19 474.64C458.87 471.67 460.02 464.46 460.93 462.97C461.85 461.48 462.77 465.60 463.68 465.71C464.60 465.83 465.51 465.03 466.43 463.65C467.34 462.28 468.60 459.76 469.18 457.47C469.75 455.18 469.52 452.32 469.86 449.92C470.21 447.51 470.89 446.37 471.24 443.05C471.58 439.73 471.18 435.74 471.92 430.00C472.67 424.26 474.47 411.27 475.70 408.60C476.93 405.93 477.82 415.78 479.30 414.00C480.78 412.22 482.82 400.58 484.60 397.90C486.38 395.22 487.85 400.99 490.00 397.90C492.15 394.81 495.62 384.65 497.50 379.38C499.38 374.10 500.00 368.85 501.25 366.25C502.50 363.65 503.75 365.00 505.00 363.75C506.25 362.50 507.71 360.62 508.75 358.75C509.79 356.88 510.42 353.33 511.25 352.50C512.08 351.67 513.02 352.60 513.75 353.75C514.48 354.90 514.90 357.29 515.62 359.38C516.35 361.46 517.29 365.94 518.12 366.25C518.96 366.56 520.00 363.96 520.62 361.25C521.25 358.54 521.46 353.33 521.88 350.00C522.29 346.67 522.40 344.79 523.12 341.25C523.85 337.71 525.31 331.67 526.25 328.75C527.19 325.83 527.92 325.94 528.75 323.75C529.58 321.56 530.00 317.81 531.25 315.62C532.50 313.44 534.90 310.83 536.25 310.62C537.60 310.42 538.54 314.06 539.38 314.38C540.21 314.69 540.21 312.19 541.25 312.50C542.29 312.81 544.58 314.79 545.62 316.25C546.67 317.71 547.08 318.54 547.50 321.25C547.92 323.96 547.60 330.21 548.12 332.50C548.65 334.79 549.69 335.62 550.62 335.00C551.56 334.38 552.92 331.46 553.75 328.75C554.58 326.04 555.10 322.29 555.62 318.75C556.15 315.21 556.15 309.75 556.88 307.50C557.60 305.25 559.06 305.25 560.00 305.25C560.94 305.25 561.77 304.62 562.50 307.50C563.23 310.38 563.75 318.75 564.38 322.50C565.00 326.25 565.73 327.19 566.25 330.00C566.77 332.81 566.98 339.58 567.50 339.38C568.02 339.17 568.75 332.81 569.38 328.75C570.00 324.69 570.42 318.96 571.25 315.00C572.08 311.04 573.12 305.94 574.38 305.00C575.62 304.06 577.71 306.67 578.75 309.38C579.79 312.08 579.79 318.85 580.62 321.25C581.46 323.65 582.92 322.71 583.75 323.75C584.58 324.79 585.00 327.29 585.62 327.50C586.25 327.71 586.35 327.29 587.50 325.00C588.65 322.71 591.25 317.19 592.50 313.75C593.75 310.31 594.06 305.73 595.00 304.38C595.94 303.02 597.29 305.31 598.12 305.62C598.96 305.94 599.48 306.04 600.00 306.25C600.52 306.46 600.62 305.52 601.25 306.88C601.88 308.23 602.92 311.67 603.75 314.38C604.58 317.08 605.42 322.60 606.25 323.12C607.08 323.65 607.92 319.69 608.75 317.50C609.58 315.31 610.52 311.88 611.25 310.00C611.98 308.12 612.29 306.46 613.12 306.25C613.96 306.04 615.10 306.88 616.25 308.75C617.40 310.62 618.75 313.96 620.00 317.50C621.25 321.04 622.50 327.40 623.75 330.00C625.00 332.60 626.25 334.06 627.50 333.12C628.75 332.19 630.21 326.56 631.25 324.38C632.29 322.19 632.71 321.25 633.75 320.00C634.79 318.75 636.35 316.98 637.50 316.88C638.65 316.77 639.58 317.60 640.62 319.38C641.67 321.15 642.60 323.23 643.75 327.50C644.90 331.77 646.25 344.79 647.50 345.00C648.75 345.21 650.00 332.50 651.25 328.75C652.50 325.00 653.75 322.92 655.00 322.50C656.25 322.08 657.40 323.33 658.75 326.25C660.10 329.17 661.88 340.00 663.12 340.00C664.38 340.00 665.21 330.31 666.25 326.25C667.29 322.19 668.33 317.29 669.38 315.62C670.42 313.96 671.15 313.23 672.50 316.25C673.85 319.27 676.15 332.40 677.50 333.75C678.85 335.10 679.58 326.15 680.62 324.38C681.67 322.60 682.60 321.56 683.75 323.12C684.90 324.69 686.35 332.08 687.50 333.75C688.65 335.42 689.38 334.48 690.62 333.12C691.88 331.77 693.85 326.56 695.00 325.62C696.15 324.69 696.15 327.81 697.50 327.50C698.85 327.19 701.56 323.65 703.12 323.75C704.69 323.85 705.73 327.40 706.88 328.12C708.02 328.85 708.85 328.12 710.00 328.12C711.15 328.12 712.71 327.60 713.75 328.12C714.79 328.65 715.62 330.62 716.25 331.25C716.88 331.88 716.67 331.67 717.50 331.88C718.33 332.08 720.31 331.77 721.25 332.50C722.19 333.23 722.50 334.58 723.12 336.25C723.75 337.92 724.27 340.31 725.00 342.50C725.73 344.69 726.56 348.44 727.50 349.38C728.44 350.31 729.27 348.12 730.62 348.12C731.98 348.12 734.58 350.10 735.62 349.38C736.67 348.65 736.25 345.10 736.88 343.75C737.50 342.40 738.44 342.29 739.38 341.25C740.31 340.21 741.46 338.23 742.50 337.50C743.54 336.77 744.79 337.40 745.62 336.88C746.46 336.35 746.77 334.69 747.50 334.38C748.23 334.06 749.06 335.42 750.00 335.00C750.94 334.58 751.88 332.92 753.12 331.88C754.38 330.83 756.35 328.85 757.50 328.75C758.65 328.65 759.17 330.94 760.00 331.25C760.83 331.56 761.67 330.10 762.50 330.62C763.33 331.15 763.96 333.23 765.00 334.38C766.04 335.52 767.71 336.35 768.75 337.50C769.79 338.65 770.52 341.15 771.25 341.25C771.98 341.35 772.29 338.44 773.12 338.12C773.96 337.81 775.31 339.69 776.25 339.38C777.19 339.06 777.81 336.46 778.75 336.25C779.69 336.04 780.52 337.60 781.88 338.12C783.23 338.65 785.52 339.58 786.88 339.38C788.23 339.17 789.06 337.08 790.00 336.88C790.94 336.67 791.25 337.92 792.50 338.12C793.75 338.33 796.35 337.92 797.50 338.12C798.65 338.33 798.44 339.17 799.38 339.38C800.31 339.58 802.08 339.79 803.12 339.38C804.17 338.96 804.90 337.71 805.62 336.88C806.35 336.04 806.35 335.42 807.50 334.38C808.65 333.33 811.25 331.04 812.50 330.62C813.75 330.21 813.96 331.98 815.00 331.88C816.04 331.77 817.71 330.42 818.75 330.00C819.79 329.58 820.42 329.38 821.25 329.38C822.08 329.38 822.29 329.90 823.75 330.00C825.21 330.10 828.12 330.42 830.00 330.00C831.88 329.58 833.17 327.50 835.00 327.50C836.83 327.50 839.10 328.98 841.00 330.00C842.90 331.02 844.90 333.12 846.40 333.60C847.90 334.08 848.68 333.92 850.00 332.90C851.32 331.88 852.82 327.68 854.30 327.50C855.78 327.32 857.35 330.48 858.90 331.80C860.45 333.12 861.82 335.40 863.60 335.40C865.38 335.40 868.00 331.80 869.60 331.80C871.20 331.80 871.70 332.43 873.20 335.40C874.70 338.37 876.82 345.02 878.60 349.60C880.38 354.18 882.00 360.82 883.90 362.90C885.80 364.98 888.50 361.33 890.00 362.10C891.50 362.87 891.95 363.62 892.90 367.50C893.85 371.38 894.82 380.93 895.70 385.40C896.58 389.87 897.48 392.37 898.20 394.30C898.92 396.23 899.70 396.55 900.00 397.00" stroke="#ffff00" stroke-width="1" fill="none" shape-rendering="crispEdges"/>
<text x="29.5" y="135" fill="#ffffc0" font-size="12.5" text-anchor="start" font-family="Liberation Sans, sans-serif" textLength="26" lengthAdjust="spacingAndGlyphs" >120.0</text>
<text x="29.5" y="236" fill="#ffffc0" font-size="12.5" text-anchor="start" font-family="Liberation Sans, sans-serif" textLength="26" lengthAdjust="spacingAndGlyphs" >100.0</text>
<text x="35.5" y="337" fill="#ffffc0" font-size="12.5" text-anchor="start" font-family="Liberation Sans, sans-serif" textLength="20" lengthAdjust="spacingAndGlyphs" >80.0</text>
<text x="35.5" y="439" fill="#ffffc0" font-size="12.5" text-anchor="start" font-family="Liberation Sans, sans-serif" textLength="20" lengthAdjust="spacingAndGlyphs" >60.0</text>
<text x="35.5" y="540" fill="#ffffc0" font-size="12.5" text-anchor="start" font-family="Liberation Sans, sans-serif" textLength="20" lengthAdjust="spacingAndGlyphs" >40.0</text>
<text x="35.5" y="641" fill="#ffffc0" font-size="12.5" text-anchor="start" font-family="Liberation Sans, sans-serif" textLength="20" lengthAdjust="spacingAndGlyphs" >20.0</text>
<text x="22.7" y="186" fill="#ffffc0" font-size="12.5" text-anchor="start" font-family="Liberation Sans, sans-serif" textLength="32.3" lengthAdjust="spacingAndGlyphs" >dBSPL</text>
<text x="906" y="135" fill="#ffffff" font-size="12.5" text-anchor="start" font-family="Liberation Sans, sans-serif" textLength="26" lengthAdjust="spacingAndGlyphs" >180.0</text>
<text x="906" y="236" fill="#ffffff" font-size="12.5" text-anchor="start" font-family="Liberation Sans, sans-serif" textLength="26" lengthAdjust="spacingAndGlyphs" >108.0</text>
<text x="906" y="337" fill="#ffffff" font-size="12.5" text-anchor="start" font-family="Liberation Sans, sans-serif" textLength="20" lengthAdjust="spacingAndGlyphs" >36.0</text>
<text x="906" y="439" fill="#ffffff" font-size="12.5" text-anchor="start" font-family="Liberation Sans, sans-serif" textLength="24" lengthAdjust="spacingAndGlyphs" >-36.0</text>
<text x="906" y="540" fill="#ffffff" font-size="12.5" text-anchor="start" font-family="Liberation Sans, sans-serif" textLength="30" lengthAdjust="spacingAndGlyphs" >-108.0</text>
<text x="906" y="641" fill="#ffffff" font-size="12.5" text-anchor="start" font-family="Liberation Sans, sans-serif" textLength="30" lengthAdjust="spacingAndGlyphs" >-180.0</text>
<text x="906" y="186" fill="#ffffff" font-size="12.5" text-anchor="start" font-family="Liberation Sans, sans-serif" textLength="19.2" lengthAdjust="spacingAndGlyphs" >Deg</text>
<text x="60.5" y="656" fill="#ffffff" font-size="12.5" text-anchor="middle" font-family="Liberation Sans, sans-serif" textLength="11" lengthAdjust="spacingAndGlyphs" >20</text>
<text x="170.29960719278864" y="656" fill="#ffffff" font-size="12.5" text-anchor="middle" font-family="Liberation Sans, sans-serif" textLength="11" lengthAdjust="spacingAndGlyphs" >50</text>
<text x="253.35980359639433" y="656" fill="#ffffff" font-size="12.5" text-anchor="middle" font-family="Liberation Sans, sans-serif" textLength="17" lengthAdjust="spacingAndGlyphs" >100</text>
<text x="336.42" y="656" fill="#ffffff" font-size="12.5" text-anchor="middle" font-family="Liberation Sans, sans-serif" textLength="17" lengthAdjust="spacingAndGlyphs" >200</text>
<text x="446.21960719278866" y="656" fill="#ffffff" font-size="12.5" text-anchor="middle" font-family="Liberation Sans, sans-serif" textLength="17" lengthAdjust="spacingAndGlyphs" >500</text>
<text x="529.2798035963943" y="656" fill="#ffffff" font-size="12.5" text-anchor="middle" font-family="Liberation Sans, sans-serif" textLength="11" lengthAdjust="spacingAndGlyphs" >1k</text>
<text x="612.34" y="656" fill="#ffffff" font-size="12.5" text-anchor="middle" font-family="Liberation Sans, sans-serif" textLength="11" lengthAdjust="spacingAndGlyphs" >2k</text>
<text x="722.1396071927886" y="656" fill="#ffffff" font-size="12.5" text-anchor="middle" font-family="Liberation Sans, sans-serif" textLength="11" lengthAdjust="spacingAndGlyphs" >5k</text>
<text x="805.1998035963943" y="656" fill="#ffffff" font-size="12.5" text-anchor="middle" font-family="Liberation Sans, sans-serif" textLength="17" lengthAdjust="spacingAndGlyphs" >10k</text>
<text x="888.26" y="656" fill="#ffffff" font-size="12.5" text-anchor="middle" font-family="Liberation Sans, sans-serif" textLength="17" lengthAdjust="spacingAndGlyphs" >20k</text>
<text x="668" y="656" fill="#ffffff" font-size="12.5" text-anchor="middle" font-family="Liberation Sans, sans-serif" textLength="12.5" lengthAdjust="spacingAndGlyphs" >Hz</text>
<path d="M67 117h10l-5-5z" fill="#fff"/><path d="M91 112h10l-5 5z" fill="#fff"/><path d="M115 114h10l-5-5zM115 116h10l-5 5z" fill="#fff"/><path d="M139 109h10l-5 5zM139 121h10l-5-5z" fill="#fff"/><rect x="180.5" y="104.5" width="23" height="21" fill="none" stroke="#d0d0d0"/><circle cx="189.5" cy="112.5" r="4.5" fill="#d4d0c8" stroke="#fff" stroke-width="1.5"/><circle cx="189.5" cy="112.5" r="3.5" fill="#fff" stroke="#808080" stroke-width="0.8"/><path d="M187 112.5h5M189.5 110v5" stroke="#ff0000" stroke-width="1.3" fill="none" /><path d="M193 116l6 6" stroke="#fff" stroke-width="2.2" fill="none" /><path d="M193.5 116.5l5 5" stroke="#c0c000" stroke-width="0.8" fill="none" /><circle cx="214" cy="113" r="4.5" fill="none" stroke="#fff" stroke-width="1.5"/><circle cx="214" cy="113" r="4.5" fill="none" stroke="#808080" stroke-width="0.6"/><path d="M217 116l6 6" stroke="#fff" stroke-width="1" fill="none" /><rect x="252" y="108" width="16" height="16" fill="#ffffc0"/><rect x="252" y="108" width="13" height="13" fill="#fff"/><rect x="252" y="108" width="13" height="1" fill="#808080"/><rect x="252" y="108" width="1" height="13" fill="#808080"/><rect x="253" y="109" width="11" height="1" fill="#404040"/><rect x="253" y="109" width="1" height="11" fill="#404040"/><rect x="253" y="119" width="11" height="1" fill="#d4d0c8"/><rect x="263" y="109" width="1" height="11" fill="#d4d0c8"/><rect x="289.5" y="108.5" width="13" height="13" fill="none" stroke="#fff"/><text x="296" y="119.5" text-anchor="middle" font-family="Liberation Sans,sans-serif" font-weight="bold" font-size="12" fill="#fff">1</text><rect x="310" y="108" width="16" height="16" fill="#ff0000"/><rect x="310" y="108" width="13" height="13" fill="#fff"/><rect x="310" y="108" width="13" height="1" fill="#808080"/><rect x="310" y="108" width="1" height="13" fill="#808080"/><rect x="311" y="109" width="11" height="1" fill="#404040"/><rect x="311" y="109" width="1" height="11" fill="#404040"/><rect x="311" y="119" width="11" height="1" fill="#d4d0c8"/><rect x="321" y="109" width="1" height="11" fill="#d4d0c8"/><path d="M313 114l2 2.5l4.5-5" stroke="#000" stroke-width="2" fill="none" /><rect x="335.5" y="108.5" width="13" height="13" fill="none" stroke="#fff"/><text x="342" y="119.5" text-anchor="middle" font-family="Liberation Sans,sans-serif" font-weight="bold" font-size="12" fill="#fff">2</text><rect x="356" y="108" width="16" height="16" fill="#ffffff"/><rect x="356" y="108" width="13" height="13" fill="#fff"/><rect x="356" y="108" width="13" height="1" fill="#808080"/><rect x="356" y="108" width="1" height="13" fill="#808080"/><rect x="357" y="109" width="11" height="1" fill="#404040"/><rect x="357" y="109" width="1" height="11" fill="#404040"/><rect x="357" y="119" width="11" height="1" fill="#d4d0c8"/><rect x="367" y="109" width="1" height="11" fill="#d4d0c8"/><rect x="381.5" y="108.5" width="13" height="13" fill="none" stroke="#fff"/><text x="388" y="119.5" text-anchor="middle" font-family="Liberation Sans,sans-serif" font-weight="bold" font-size="12" fill="#fff">3</text><rect x="402" y="108" width="16" height="16" fill="#00ff00"/><rect x="402" y="108" width="13" height="13" fill="#fff"/><rect x="402" y="108" width="13" height="1" fill="#808080"/><rect x="402" y="108" width="1" height="13" fill="#808080"/><rect x="403" y="109" width="11" height="1" fill="#404040"/><rect x="403" y="109" width="1" height="11" fill="#404040"/><rect x="403" y="119" width="11" height="1" fill="#d4d0c8"/><rect x="413" y="109" width="1" height="11" fill="#d4d0c8"/><rect x="427.5" y="108.5" width="13" height="13" fill="none" stroke="#fff"/><text x="434" y="119.5" text-anchor="middle" font-family="Liberation Sans,sans-serif" font-weight="bold" font-size="12" fill="#fff">4</text><rect x="448" y="108" width="16" height="16" fill="#ffff00"/><rect x="448" y="108" width="13" height="13" fill="#fff"/><rect x="448" y="108" width="13" height="1" fill="#808080"/><rect x="448" y="108" width="1" height="13" fill="#808080"/><rect x="449" y="109" width="11" height="1" fill="#404040"/><rect x="449" y="109" width="1" height="11" fill="#404040"/><rect x="449" y="119" width="11" height="1" fill="#d4d0c8"/><rect x="459" y="109" width="1" height="11" fill="#d4d0c8"/><path d="M451 114l2 2.5l4.5-5" stroke="#000" stroke-width="2" fill="none" /><rect x="473.5" y="108.5" width="13" height="13" fill="none" stroke="#fff"/><text x="480" y="119.5" text-anchor="middle" font-family="Liberation Sans,sans-serif" font-weight="bold" font-size="12" fill="#fff">5</text><rect x="494" y="108" width="16" height="16" fill="#ff8000"/><rect x="494" y="108" width="13" height="13" fill="#fff"/><rect x="494" y="108" width="13" height="1" fill="#808080"/><rect x="494" y="108" width="1" height="13" fill="#808080"/><rect x="495" y="109" width="11" height="1" fill="#404040"/><rect x="495" y="109" width="1" height="11" fill="#404040"/><rect x="495" y="119" width="11" height="1" fill="#d4d0c8"/><rect x="505" y="109" width="1" height="11" fill="#d4d0c8"/><rect x="519.5" y="108.5" width="13" height="13" fill="none" stroke="#fff"/><text x="526" y="119.5" text-anchor="middle" font-family="Liberation Sans,sans-serif" font-weight="bold" font-size="12" fill="#fff">6</text><rect x="540" y="108" width="16" height="16" fill="#0000ff"/><rect x="540" y="108" width="13" height="13" fill="#fff"/><rect x="540" y="108" width="13" height="1" fill="#808080"/><rect x="540" y="108" width="1" height="13" fill="#808080"/><rect x="541" y="109" width="11" height="1" fill="#404040"/><rect x="541" y="109" width="1" height="11" fill="#404040"/><rect x="541" y="119" width="11" height="1" fill="#d4d0c8"/><rect x="551" y="109" width="1" height="11" fill="#d4d0c8"/><path d="M543 114l2 2.5l4.5-5" stroke="#000" stroke-width="2" fill="none" /><rect x="565.5" y="108.5" width="13" height="13" fill="none" stroke="#fff"/><text x="572" y="119.5" text-anchor="middle" font-family="Liberation Sans,sans-serif" font-weight="bold" font-size="12" fill="#fff">7</text><rect x="586" y="108" width="16" height="16" fill="#ff00ff"/><rect x="586" y="108" width="13" height="13" fill="#fff"/><rect x="586" y="108" width="13" height="1" fill="#808080"/><rect x="586" y="108" width="1" height="13" fill="#808080"/><rect x="587" y="109" width="11" height="1" fill="#404040"/><rect x="587" y="109" width="1" height="11" fill="#404040"/><rect x="587" y="119" width="11" height="1" fill="#d4d0c8"/><rect x="597" y="109" width="1" height="11" fill="#d4d0c8"/><rect x="611.5" y="108.5" width="13" height="13" fill="none" stroke="#fff"/><text x="618" y="119.5" text-anchor="middle" font-family="Liberation Sans,sans-serif" font-weight="bold" font-size="12" fill="#fff">8</text><rect x="606.5" y="104.5" width="23" height="21" fill="none" stroke="#d0d0d0"/><rect x="632" y="108" width="16" height="16" fill="#80ffff"/><rect x="632" y="108" width="13" height="13" fill="#fff"/><rect x="632" y="108" width="13" height="1" fill="#808080"/><rect x="632" y="108" width="1" height="13" fill="#808080"/><rect x="633" y="109" width="11" height="1" fill="#404040"/><rect x="633" y="109" width="1" height="11" fill="#404040"/><rect x="633" y="119" width="11" height="1" fill="#d4d0c8"/><rect x="643" y="109" width="1" height="11" fill="#d4d0c8"/><rect x="657.5" y="108.5" width="13" height="13" fill="none" stroke="#fff"/><text x="664" y="119.5" text-anchor="middle" font-family="Liberation Sans,sans-serif" font-weight="bold" font-size="12" fill="#fff">9</text><rect x="678" y="108" width="16" height="16" fill="#c0c0c0"/><rect x="678" y="108" width="13" height="13" fill="#fff"/><rect x="678" y="108" width="13" height="1" fill="#808080"/><rect x="678" y="108" width="1" height="13" fill="#808080"/><rect x="679" y="109" width="11" height="1" fill="#404040"/><rect x="679" y="109" width="1" height="11" fill="#404040"/><rect x="679" y="119" width="11" height="1" fill="#d4d0c8"/><rect x="689" y="109" width="1" height="11" fill="#d4d0c8"/><rect x="715.5" y="108.5" width="13" height="13" fill="none" stroke="#fff"/><text x="722" y="119.5" text-anchor="middle" font-family="Liberation Sans,sans-serif" font-weight="bold" font-size="12" fill="#fff">A</text><rect x="739.5" y="108.5" width="13" height="13" fill="none" stroke="#fff"/><text x="746" y="119.5" text-anchor="middle" font-family="Liberation Sans,sans-serif" font-weight="bold" font-size="12" fill="#fff">B</text></svg>
<svg width="960" height="728" style="position:absolute;left:0;top:0;will-change:transform"><defs><pattern id="dith" width="2" height="2" patternUnits="userSpaceOnUse"><rect width="2" height="2" fill="#d4d0c8"/><rect width="1" height="1" fill="#fff"/><rect x="1" y="1" width="1" height="1" fill="#fff"/></pattern><pattern id="ydith" width="2" height="2" patternUnits="userSpaceOnUse"><rect width="2" height="2" fill="#ffff00"/><rect width="1" height="1" fill="#fff"/><rect x="1" y="1" width="1" height="1" fill="#fff"/></pattern></defs><path d="M9 6.5q-3 3-2.5 7.5q1 5 6 6q5 1 8-2" fill="none" stroke="#a8a890" stroke-width="2.6" stroke-dasharray="1.5 1"/><path d="M9 6.5q-3 3-2.5 7.5q1 5 6 6q5 1 8-2" fill="none" stroke="#303850" stroke-width="0.6"/><path d="M20.2 8.2A4.3 4.6 0 1 0 20.2 13.8" fill="none" stroke="#a06820" stroke-width="4"/><path d="M20.2 8.2A4.3 4.6 0 1 0 20.2 13.8" fill="none" stroke="#000" stroke-width="2.6"/><rect x="8" y="24" width="16" height="16" fill="#000"/><rect x="9" y="25" width="14" height="14" fill="#fff"/><text x="9" y="32" font-family="Liberation Sans,sans-serif" font-weight="bold" font-size="9.5" fill="#000" textLength="14" lengthAdjust="spacingAndGlyphs">mls</text><path d="M9 34.5h3l3 2l3-3l3 3l2 1" stroke="#000" stroke-width="1" fill="none" /><path d="M9 33.5l2-0.5l3 4l3 1l3-4l3 2" stroke="#ff0000" stroke-width="1" fill="none" /><path d="M8.5 60.5v-9h4l1 1h5v2.5h-5l-4 5.5z" fill="#ffff00" stroke="#000"/><path d="M9 52h3l1 1h5v1.5h-5.5l-3.5 5z" fill="url(#ydith)"/><path d="M8.5 60.5l5-6h10.5l-4.5 6z" fill="#808000" stroke="#000"/><path d="M16 49.5q2.5-2.5 5.5 0" stroke="#000" stroke-width="1" fill="none" /><path d="M20 49.5h4l-2 2.5z" fill="#000"/><rect x="34" y="48" width="14" height="14" fill="#000"/><rect x="35" y="49" width="1" height="12" fill="#808000"/><rect x="46" y="51" width="1" height="10" fill="#808000"/><rect x="35" y="56" width="12" height="1" fill="#808000"/><rect x="37" y="49" width="8" height="6" fill="#c0c0c0"/><rect x="46" y="49" width="1" height="1" fill="#fff"/><rect x="43" y="58" width="2" height="3" fill="#d4d0c8"/><rect x="59" y="48" width="14" height="14" fill="#000"/><rect x="60" y="49" width="1" height="12" fill="#808000"/><rect x="71" y="51" width="1" height="10" fill="#808000"/><rect x="60" y="56" width="12" height="1" fill="#808000"/><rect x="62" y="49" width="8" height="6" fill="#c0c0c0"/><rect x="71" y="49" width="1" height="1" fill="#fff"/><rect x="68" y="58" width="2" height="3" fill="#d4d0c8"/><rect x="62" y="49" width="8" height="6" fill="#d4d0c8"/><path d="M63.5 55V51.5H64.5V49.5H67.5V51.5H68.5V55M64 52.5H68" stroke="#0000ff" stroke-width="1" fill="none" /><rect x="83" y="47" width="14" height="14" fill="#000"/><rect x="84" y="48" width="1" height="12" fill="#808000"/><rect x="95" y="50" width="1" height="10" fill="#808000"/><rect x="84" y="55" width="12" height="1" fill="#808000"/><rect x="86" y="48" width="8" height="6" fill="#c0c0c0"/><rect x="95" y="48" width="1" height="1" fill="#fff"/><rect x="92" y="57" width="2" height="3" fill="#d4d0c8"/><rect x="89.5" y="52.5" width="9" height="10" fill="#f0f0e8" stroke="#000"/><rect x="91" y="56" width="5" height="1" fill="#000"/><rect x="91" y="58" width="1" height="1" fill="#000"/><rect x="93" y="58" width="3" height="1" fill="#000"/><rect x="91" y="60" width="1" height="1" fill="#000"/><rect x="93" y="60" width="1" height="1" fill="#000"/><rect x="95" y="60" width="1" height="1" fill="#000"/><rect x="108" y="47" width="14" height="14" fill="#000"/><rect x="109" y="48" width="1" height="12" fill="#808000"/><rect x="120" y="50" width="1" height="10" fill="#808000"/><rect x="109" y="55" width="12" height="1" fill="#808000"/><rect x="111" y="48" width="8" height="6" fill="#c0c0c0"/><rect x="120" y="48" width="1" height="1" fill="#fff"/><rect x="117" y="57" width="2" height="3" fill="#d4d0c8"/><rect x="113" y="53" width="11" height="10" fill="#000"/><rect x="114" y="54" width="9" height="8" fill="#000080"/><path d="M114.5 58.5q4-5 8 0" stroke="#00ffff" stroke-width="1" fill="none" /><path d="M133 56l4-8h9l-4 8z" fill="#c8c8c8"/><path d="M136 47.5h10M133.5 55l3.5-7" stroke="#000" stroke-width="1.2" fill="none" stroke-dasharray="1.5 1"/><path d="M133 56.5h9.5l4-7.5" stroke="#008080" stroke-width="1.3" fill="none" /><path d="M138 50.5h5" stroke="#000" stroke-width="1.5" fill="none" /><rect x="147" y="49" width="1" height="12" fill="#000"/><rect x="137" y="57" width="9" height="4" fill="#fff"/><rect x="137" y="58" width="9" height="1" fill="#b0b0b0"/><rect x="138" y="61" width="8" height="1" fill="#909090"/><path d="M162.5 48.5h8l-1.5 5h-8z" fill="#fff" stroke="#000"/><rect x="163" y="50" width="5" height="1" fill="#000"/><rect x="162" y="52" width="5" height="1" fill="#000"/><rect x="158.5" y="53.5" width="14" height="8" rx="1.5" fill="#d8d8d8" stroke="#000"/><rect x="159" y="56" width="13" height="1" fill="#000"/><rect x="165" y="58" width="3" height="1" fill="#ffff00"/><rect x="160" y="60" width="11" height="1" fill="#000"/><rect x="170" y="54" width="1" height="1" fill="#808080"/><rect x="172" y="56" width="1" height="1" fill="#808080"/><rect x="185" y="46" width="1" height="19" fill="#808080"/><rect x="186" y="46" width="1" height="19" fill="#fff"/><rect x="222" y="46" width="1" height="19" fill="#808080"/><rect x="223" y="46" width="1" height="19" fill="#fff"/><rect x="322" y="46" width="1" height="19" fill="#808080"/><rect x="323" y="46" width="1" height="19" fill="#fff"/><rect x="634" y="46" width="1" height="19" fill="#808080"/><rect x="635" y="46" width="1" height="19" fill="#fff"/><rect x="671" y="46" width="1" height="19" fill="#808080"/><rect x="672" y="46" width="1" height="19" fill="#fff"/><path d="M196.5 49.5h5l1 1h7v12h-13z" fill="#ffff80" stroke="#000" stroke-width="1"/><path d="M196.5 50.5h13" stroke="#000" stroke-width="1" fill="none" /><path d="M199 53l2 2l4-4M201 58l2 2l4-4" stroke="#000" stroke-width="1.6" fill="none" /><rect x="232" y="48" width="16" height="14" fill="#000"/><rect x="233" y="49" width="1" height="1" fill="#fff"/><rect x="246" y="49" width="1" height="1" fill="#fff"/><rect x="233" y="51" width="1" height="1" fill="#fff"/><rect x="246" y="51" width="1" height="1" fill="#fff"/><rect x="233" y="53" width="1" height="1" fill="#fff"/><rect x="246" y="53" width="1" height="1" fill="#fff"/><rect x="233" y="55" width="1" height="1" fill="#fff"/><rect x="246" y="55" width="1" height="1" fill="#fff"/><rect x="233" y="57" width="1" height="1" fill="#fff"/><rect x="246" y="57" width="1" height="1" fill="#fff"/><rect x="233" y="59" width="1" height="1" fill="#fff"/><rect x="246" y="59" width="1" height="1" fill="#fff"/><rect x="233" y="61" width="1" height="1" fill="#fff"/><rect x="246" y="61" width="1" height="1" fill="#fff"/><rect x="236" y="50" width="8" height="10" fill="#000080"/><path d="M236.5 55.5q3.5-4 7 0" stroke="#00ffff" stroke-width="1" fill="none" /><rect x="257.5" y="49.5" width="15" height="12" rx="2" fill="#c8c8d0" stroke="#808080"/><circle cx="265" cy="56" r="3.5" fill="#202030" stroke="#606070"/><rect x="260" y="50" width="4" height="2" fill="#f0f0f0"/><path d="M283.5 58.5l8-7h5l-1 3l-8 7h-4z" fill="#ffff60" stroke="#000"/><path d="M284 58.5l4 0l-1 3h-4z" fill="#fff"/><path d="M306 55h5l-2.5 3z" fill="#000"/><path d="M332.5 53.5V47.5H336.5V53.5H339.5V47.5H343.5V53.5H346.5V47.5H348" stroke="#000" stroke-width="1.2" fill="none" /><path d="M332 58q2-4 3.5-2t3 4t3.5 2t3-4t3 2" stroke="#000" stroke-width="1.4" fill="none" /><path d="M357 50.0l3 -1.5l3 1.5l3-2l3 1.5l3-1.5" stroke="#000" stroke-width="1.1" fill="none" stroke-dasharray="1.2 0.8"/><path d="M357 52.6l3 -1.5l3 1.5l3-2l3 1.5l3-1.5" stroke="#000" stroke-width="1.1" fill="none" stroke-dasharray="1.2 0.8"/><path d="M357 55.2l3 -1.5l3 1.5l3-2l3 1.5l3-1.5" stroke="#000" stroke-width="1.1" fill="none" stroke-dasharray="1.2 0.8"/><path d="M357 57.8l3 -1.5l3 1.5l3-2l3 1.5l3-1.5" stroke="#000" stroke-width="1.1" fill="none" stroke-dasharray="1.2 0.8"/><path d="M357 60.4l3 -1.5l3 1.5l3-2l3 1.5l3-1.5" stroke="#000" stroke-width="1.1" fill="none" stroke-dasharray="1.2 0.8"/><path d="M383 62q5-1 6.5-5v-9.5h1v9.5q1.5 4 6.5 5z" fill="#303030"/><path d="M407.5 49.5h3l2.5 2.5l-0.5 1l2 1.5l-0.5 1l2 1.5l-0.5 1l4.5 4" stroke="#000" stroke-width="1.3" fill="none" /><path d="M433 62.5h16M434.5 62V47M437.5 62V53M440.5 62V55M443.5 62V58" stroke="#000" stroke-width="1" fill="none" /><path d="M459 55q2.5-5 5 0t5 0" stroke="#000" stroke-width="1.6" fill="none" /><path d="M487 58l4-3l4 3M489 56v-3M485 55l2.5 1M495 55l-2.5 1M484 58l3 3M496 58l-3 3" stroke="#606000" stroke-width="1" fill="none" stroke-dasharray="1 1"/><path d="M482 52.5q4 1 8 0.5t8-0.5" stroke="#000" stroke-width="1.6" fill="none" /><path d="M482.5 53l8 8M482 58l4-4M497.5 58l-3.5-4.5" stroke="#000" stroke-width="1.5" fill="none" /><rect x="490" y="60" width="2" height="2" fill="#ff0000"/><rect x="482" y="51" width="1" height="1" fill="#4040ff"/><rect x="485" y="48" width="1" height="1" fill="#4040ff"/><rect x="490" y="48" width="1" height="1" fill="#4040ff"/><rect x="495" y="48" width="1" height="1" fill="#4040ff"/><rect x="497" y="51" width="1" height="1" fill="#4040ff"/><text x="508" y="56" font-family="Liberation Sans,sans-serif" font-weight="bold" font-size="11" fill="#000">T</text><text x="515" y="63" font-family="Liberation Sans,sans-serif" font-weight="bold" font-size="10" fill="#000">S</text><text x="531" y="57" font-family="Liberation Sans,sans-serif" font-weight="bold" font-size="11" fill="#000" textLength="12" lengthAdjust="spacingAndGlyphs">W</text><text x="541" y="63" font-family="Liberation Sans,sans-serif" font-weight="bold" font-size="10" fill="#000">F</text><text x="556" y="59" font-family="Liberation Sans,sans-serif" font-weight="bold" font-size="11" fill="#000" textLength="16" lengthAdjust="spacingAndGlyphs">Leq</text><path d="M582 61h3v-3h3v-3h3v-3h3v-3h4" stroke="#000" stroke-width="2" fill="none" /><text x="608" y="57" font-family="Liberation Sans,sans-serif" font-weight="bold" font-size="10" fill="#a0a0a0">Q</text><text x="616" y="63" font-family="Liberation Sans,sans-serif" font-weight="bold" font-size="9" fill="#a0a0a0">C</text><rect x="648" y="48" width="12" height="11" fill="#000"/><rect x="649" y="49" width="10" height="9" fill="#000080"/><path d="M649.5 54q4-6 9 0" stroke="#00ffff" stroke-width="1" fill="none" /><path d="M645.5 48v10M644 49.5l1.5-1.5l1.5 1.5M644 56.5l1.5 1.5l1.5-1.5M648 61.5h12M649.5 60l-1.5 1.5l1.5 1.5M658.5 60l1.5 1.5l-1.5 1.5" stroke="#000" stroke-width="1" fill="none" /><circle cx="689" cy="55" r="7.5" fill="#50a858" stroke="#388040" stroke-width="1"/><circle cx="687" cy="52.5" r="3.5" fill="#78c880" opacity="0.6"/><text x="685" y="60.5" font-family="Liberation Sans,sans-serif" font-weight="bold" font-size="13" fill="#fff">?</text><path d="M707 50.5q1-3 4-3t4 3q0 2-2.5 3.5v2.5h-3v-3.5q2.5-1.5 2.5-2.5q0-1-1-1q-1 0-1.5 1z" fill="#80d088" stroke="#000" stroke-width="1"/><rect x="709.5" y="59.5" width="3" height="3" fill="#80d088" stroke="#000"/><circle cx="717" cy="57" r="5.3" fill="#3090c0" stroke="#000060" stroke-width="1"/><path d="M714.5 59q2-3 4-5M717 61q1-2 3-3" stroke="#208020" stroke-width="1.5" fill="none" /><path d="M715 55l2-2" stroke="#c0e080" stroke-width="0.8" fill="none" /><path d="M11.5 73.5l9 7.5l-9 7.5z" fill="#20c020" stroke="#108010"/><path d="M12.5 75.5l6 5.5l-6 5z" fill="#60e060"/><rect x="34" y="74" width="14" height="14" fill="#000"/><rect x="35" y="75" width="1" height="12" fill="#808000"/><rect x="46" y="77" width="1" height="10" fill="#808000"/><rect x="35" y="82" width="12" height="1" fill="#808000"/><rect x="37" y="75" width="8" height="6" fill="#c0c0c0"/><rect x="46" y="75" width="1" height="1" fill="#fff"/><rect x="43" y="84" width="2" height="3" fill="#d4d0c8"/><rect x="37" y="75" width="8" height="6" fill="#d4d0c8"/><path d="M38.5 81V77.5H39.5V75.5H42.5V77.5H43.5V81M39 78.5H43" stroke="#0000ff" stroke-width="1" fill="none" /><path d="M58 76l2-1l2 1l2-1l2 1l2-1l2 1l3-1l2 2" stroke="#ff0000" stroke-width="1.4" fill="none" /><path d="M58 79l2-1l2 1l2-1l2 1l2-1l2 1l3-1l2 2" stroke="#000000" stroke-width="1.4" fill="none" /><path d="M58 82l2-1l2 1l2-1l2 1l2-1l2 1l3-1l2 2" stroke="#00e000" stroke-width="1.4" fill="none" /><path d="M58 85l2-1l2 1l2-1l2 1l2-1l2 1l3-1l2 2" stroke="#0000ff" stroke-width="1.4" fill="none" /><path d="M58 88l2-1l2 1l2-1l2 1l2-1l2 1l3-1l2 2" stroke="#ff9000" stroke-width="1.4" fill="none" /><path d="M91 81l-2.5-4h-2.5l-2 2v3l2 3h2.5l5-7h2.5l2 2v3l-2 3h-2.5z" stroke="#600040" stroke-width="1.5" fill="none" /><path d="M88.5 84.5l5-7" stroke="#804020" stroke-width="1" fill="none" /><rect x="112" y="77" width="9" height="7" fill="#000080"/><rect x="113" y="78" width="7" height="5" fill="#2050ff"/><path d="M114 74.5l2.5 2l2.5-2M114 87l2.5-2l2.5 2" stroke="#000040" stroke-width="1.3" fill="none" /><rect x="116" y="73" width="1" height="1" fill="#000040"/><rect x="116" y="88" width="1" height="1" fill="#000040"/><rect x="135" y="76" width="4" height="1" fill="#000"/><rect x="142" y="76" width="5" height="1" fill="#000"/><rect x="144" y="74" width="1" height="1" fill="#000"/><rect x="144" y="78" width="1" height="1" fill="#000"/><path d="M134 84.5l2 3l2.5-5h2" stroke="#000" stroke-width="1.4" fill="none" /><path d="M141.5 84.5h6M144.5 81.5v6" stroke="#000" stroke-width="1.3" fill="none" /><path d="M159.5 75.5h5l1 1h7v12h-13z" fill="#ffff80" stroke="#000" stroke-width="1"/><path d="M159.5 76.5h13" stroke="#000" stroke-width="1" fill="none" /><path d="M162 79l2 2l4-4M164 84l2 2l4-4" stroke="#000" stroke-width="1.6" fill="none" /><rect x="183" y="72" width="1" height="20" fill="#808080"/><rect x="184" y="72" width="1" height="20" fill="#fff"/><rect x="240" y="72" width="1" height="20" fill="#808080"/><rect x="241" y="72" width="1" height="20" fill="#fff"/><rect x="323" y="72" width="1" height="20" fill="#808080"/><rect x="324" y="72" width="1" height="20" fill="#fff"/><path d="M191 87.5h1.5v-13h2v13h12" stroke="#000" stroke-width="1" fill="none" /><rect x="212" y="70" width="24" height="23" fill="url(#dith)"/><rect x="212" y="70" width="24" height="1" fill="#808080"/><rect x="212" y="70" width="1" height="23" fill="#808080"/><rect x="212" y="92" width="24" height="1" fill="#fff"/><rect x="235" y="70" width="1" height="23" fill="#fff"/><rect x="270" y="70" width="25" height="23" fill="url(#dith)"/><rect x="270" y="70" width="25" height="1" fill="#808080"/><rect x="270" y="70" width="1" height="23" fill="#808080"/><rect x="270" y="92" width="25" height="1" fill="#fff"/><rect x="294" y="70" width="1" height="23" fill="#fff"/><path d="M217.5 83.5l4.5-4.5h3l4.5 4.5h2.5" stroke="#000" stroke-width="1.1" fill="none" /><ellipse cx="258" cy="81" rx="3.5" ry="4" fill="none" stroke="#000" stroke-width="1.5"/><path d="M258 75.5v11M255 75.5h6M255 86.5h6" stroke="#000" stroke-width="1.4" fill="none" /><path d="M275.5 79.5q3 1 5 4.5l2.5 5v-14.5q2 1 4 6l3.5 6.5" stroke="#000" stroke-width="1.3" fill="none" /><circle cx="307.5" cy="81" r="6.8" fill="#f0f0f0" stroke="#606048" stroke-width="2.2"/><rect x="307" y="75" width="1" height="2" fill="#000"/><rect x="307" y="85" width="1" height="2" fill="#000"/><rect x="302" y="80" width="2" height="1" fill="#000"/><rect x="311" y="80" width="2" height="1" fill="#000"/><path d="M307.5 81.5l-3.5-3" stroke="#ff0000" stroke-width="1" fill="none" /><path d="M307.5 81.5l3.5-3.5" stroke="#0000ff" stroke-width="1" fill="none" /><rect x="328" y="71" width="64" height="21" fill="#fff"/><rect x="328" y="71" width="64" height="1" fill="#808080"/><rect x="328" y="71" width="1" height="21" fill="#808080"/><rect x="329" y="72" width="62" height="1" fill="#404040"/><rect x="329" y="72" width="1" height="19" fill="#404040"/><rect x="328" y="91" width="64" height="1" fill="#fff"/><rect x="391" y="71" width="1" height="21" fill="#fff"/><rect x="329" y="90" width="62" height="1" fill="#d4d0c8"/><rect x="390" y="72" width="1" height="19" fill="#d4d0c8"/><rect x="374" y="74" width="16" height="16" fill="#d4d0c8"/><rect x="374" y="74" width="16" height="1" fill="#d4d0c8"/><rect x="374" y="74" width="1" height="16" fill="#d4d0c8"/><rect x="375" y="75" width="14" height="1" fill="#fff"/><rect x="375" y="75" width="1" height="14" fill="#fff"/><rect x="374" y="89" width="16" height="1" fill="#404040"/><rect x="389" y="74" width="1" height="16" fill="#404040"/><rect x="375" y="88" width="14" height="1" fill="#808080"/><rect x="388" y="75" width="1" height="14" fill="#808080"/><path d="M378 80h7l-3.5 4z" fill="#808080"/><path d="M382 84.5l3.5-4" stroke="#fff" stroke-width="1" fill="none" /><text x="332" y="86" font-family="Liberation Sans,sans-serif" font-size="12.5" fill="#808080" textLength="25" lengthAdjust="spacingAndGlyphs">CH A</text><rect x="393" y="71" width="64" height="21" fill="#fff"/><rect x="393" y="71" width="64" height="1" fill="#808080"/><rect x="393" y="71" width="1" height="21" fill="#808080"/><rect x="394" y="72" width="62" height="1" fill="#404040"/><rect x="394" y="72" width="1" height="19" fill="#404040"/><rect x="393" y="91" width="64" height="1" fill="#fff"/><rect x="456" y="71" width="1" height="21" fill="#fff"/><rect x="394" y="90" width="62" height="1" fill="#d4d0c8"/><rect x="455" y="72" width="1" height="19" fill="#d4d0c8"/><rect x="439" y="74" width="16" height="16" fill="#d4d0c8"/><rect x="439" y="74" width="16" height="1" fill="#d4d0c8"/><rect x="439" y="74" width="1" height="16" fill="#d4d0c8"/><rect x="440" y="75" width="14" height="1" fill="#fff"/><rect x="440" y="75" width="1" height="14" fill="#fff"/><rect x="439" y="89" width="16" height="1" fill="#404040"/><rect x="454" y="74" width="1" height="16" fill="#404040"/><rect x="440" y="88" width="14" height="1" fill="#808080"/><rect x="453" y="75" width="1" height="14" fill="#808080"/><path d="M443 80h7l-3.5 4z" fill="#000"/><text x="397" y="86" font-family="Liberation Sans,sans-serif" font-size="12.5" fill="#000" textLength="32.5" lengthAdjust="spacingAndGlyphs">dBSPL</text><rect x="458" y="71" width="90" height="21" fill="#fff"/><rect x="458" y="71" width="90" height="1" fill="#808080"/><rect x="458" y="71" width="1" height="21" fill="#808080"/><rect x="459" y="72" width="88" height="1" fill="#404040"/><rect x="459" y="72" width="1" height="19" fill="#404040"/><rect x="458" y="91" width="90" height="1" fill="#fff"/><rect x="547" y="71" width="1" height="21" fill="#fff"/><rect x="459" y="90" width="88" height="1" fill="#d4d0c8"/><rect x="546" y="72" width="1" height="19" fill="#d4d0c8"/><rect x="530" y="74" width="16" height="16" fill="#d4d0c8"/><rect x="530" y="74" width="16" height="1" fill="#d4d0c8"/><rect x="530" y="74" width="1" height="16" fill="#d4d0c8"/><rect x="531" y="75" width="14" height="1" fill="#fff"/><rect x="531" y="75" width="1" height="14" fill="#fff"/><rect x="530" y="89" width="16" height="1" fill="#404040"/><rect x="545" y="74" width="1" height="16" fill="#404040"/><rect x="531" y="88" width="14" height="1" fill="#808080"/><rect x="544" y="75" width="1" height="14" fill="#808080"/><path d="M534 80h7l-3.5 4z" fill="#000"/><text x="462" y="86" font-family="Liberation Sans,sans-serif" font-size="12.5" fill="#000" textLength="61" lengthAdjust="spacingAndGlyphs">1/12 Octave</text><rect x="904" y="6" width="16" height="14" fill="#d4d0c8"/><rect x="904" y="6" width="16" height="1" fill="#fff"/><rect x="904" y="6" width="1" height="14" fill="#fff"/><rect x="904" y="19" width="16" height="1" fill="#404040"/><rect x="919" y="6" width="1" height="14" fill="#404040"/><rect x="905" y="18" width="14" height="1" fill="#808080"/><rect x="918" y="7" width="1" height="12" fill="#808080"/><rect x="920" y="6" width="16" height="14" fill="#d4d0c8"/><rect x="920" y="6" width="16" height="1" fill="#fff"/><rect x="920" y="6" width="1" height="14" fill="#fff"/><rect x="920" y="19" width="16" height="1" fill="#404040"/><rect x="935" y="6" width="1" height="14" fill="#404040"/><rect x="921" y="18" width="14" height="1" fill="#808080"/><rect x="934" y="7" width="1" height="12" fill="#808080"/><rect x="938" y="6" width="16" height="14" fill="#d4d0c8"/><rect x="938" y="6" width="16" height="1" fill="#fff"/><rect x="938" y="6" width="1" height="14" fill="#fff"/><rect x="938" y="19" width="16" height="1" fill="#404040"/><rect x="953" y="6" width="1" height="14" fill="#404040"/><rect x="939" y="18" width="14" height="1" fill="#808080"/><rect x="952" y="7" width="1" height="12" fill="#808080"/><rect x="908" y="15" width="6" height="2" fill="#000"/><path d="M942 9l7 6M949 9l-7 6" stroke="#000" stroke-width="1.6" fill="none" /><rect x="904" y="25" width="16" height="14" fill="#d4d0c8"/><rect x="904" y="25" width="16" height="1" fill="#fff"/><rect x="904" y="25" width="1" height="14" fill="#fff"/><rect x="904" y="38" width="16" height="1" fill="#404040"/><rect x="919" y="25" width="1" height="14" fill="#404040"/><rect x="905" y="37" width="14" height="1" fill="#808080"/><rect x="918" y="26" width="1" height="12" fill="#808080"/><rect x="920" y="25" width="16" height="14" fill="#d4d0c8"/><rect x="920" y="25" width="16" height="1" fill="#fff"/><rect x="920" y="25" width="1" height="14" fill="#fff"/><rect x="920" y="38" width="16" height="1" fill="#404040"/><rect x="935" y="25" width="1" height="14" fill="#404040"/><rect x="921" y="37" width="14" height="1" fill="#808080"/><rect x="934" y="26" width="1" height="12" fill="#808080"/><rect x="938" y="25" width="16" height="14" fill="#d4d0c8"/><rect x="938" y="25" width="16" height="1" fill="#fff"/><rect x="938" y="25" width="1" height="14" fill="#fff"/><rect x="938" y="38" width="16" height="1" fill="#404040"/><rect x="953" y="25" width="1" height="14" fill="#404040"/><rect x="939" y="37" width="14" height="1" fill="#808080"/><rect x="952" y="26" width="1" height="12" fill="#808080"/><rect x="908" y="34" width="6" height="2" fill="#000"/><path d="M942 28l7 6M949 28l-7 6" stroke="#000" stroke-width="1.6" fill="none" /><rect x="923.5" y="8.5" width="8" height="8" fill="none" stroke="#000"/><rect x="923" y="9" width="9" height="1" fill="#000"/><rect x="925.5" y="27.5" width="5" height="5" fill="#d4d0c8" stroke="#000"/><rect x="925" y="28" width="6" height="1" fill="#000"/><rect x="923.5" y="30.5" width="5" height="5" fill="#d4d0c8" stroke="#000"/><rect x="923" y="31" width="6" height="1" fill="#000"/><text x="6.5" y="711" font-family="Liberation Sans,sans-serif" font-weight="bold" font-size="11.5" fill="#000" textLength="40.5" lengthAdjust="spacingAndGlyphs">Input A</text><text x="76" y="711" font-family="Liberation Sans,sans-serif" font-weight="bold" font-size="11.5" fill="#000" textLength="24" lengthAdjust="spacingAndGlyphs">dBfs</text><text x="6" y="722" font-family="Liberation Sans,sans-serif" font-weight="bold" font-size="10" fill="#000" textLength="15" lengthAdjust="spacingAndGlyphs">-50</text><text x="93" y="722" font-family="Liberation Sans,sans-serif" font-weight="bold" font-size="10" fill="#000" textLength="6" lengthAdjust="spacingAndGlyphs">0</text><rect x="35" y="720" width="1" height="3" fill="#000"/><rect x="45" y="720" width="1" height="3" fill="#000"/><rect x="56" y="720" width="1" height="3" fill="#000"/><rect x="73" y="720" width="1" height="3" fill="#000"/><rect x="90" y="720" width="1" height="3" fill="#000"/><rect x="25" y="713" width="1" height="10" fill="#ff8000"/><path d="M108 711.5h6.5v-8h2.5v8h7" stroke="#000" stroke-width="1" fill="none" /><rect x="129" y="700" width="60" height="24" fill="#fff"/><rect x="129" y="700" width="60" height="1" fill="#808080"/><rect x="129" y="700" width="1" height="24" fill="#808080"/><text x="138.75" y="714" font-family="Liberation Sans,sans-serif" font-weight="bold" font-size="13" fill="#000" textLength="40.25" lengthAdjust="spacingAndGlyphs">0 dBV</text><path d="M196 713h10l-5-5z" fill="#000"/><path d="M221 709h10l-5 5z" fill="#000"/><rect x="241" y="703" width="1" height="19" fill="#808080"/><rect x="242" y="703" width="1" height="19" fill="#fff"/><text x="247.5" y="711" font-family="Liberation Sans,sans-serif" font-weight="bold" font-size="11.5" fill="#000" textLength="40.5" lengthAdjust="spacingAndGlyphs">Input B</text><text x="317" y="711" font-family="Liberation Sans,sans-serif" font-weight="bold" font-size="11.5" fill="#000" textLength="24" lengthAdjust="spacingAndGlyphs">dBfs</text><text x="247" y="722" font-family="Liberation Sans,sans-serif" font-weight="bold" font-size="10" fill="#000" textLength="15" lengthAdjust="spacingAndGlyphs">-50</text><text x="334" y="722" font-family="Liberation Sans,sans-serif" font-weight="bold" font-size="10" fill="#000" textLength="6" lengthAdjust="spacingAndGlyphs">0</text><rect x="276" y="720" width="1" height="3" fill="#000"/><rect x="286" y="720" width="1" height="3" fill="#000"/><rect x="297" y="720" width="1" height="3" fill="#000"/><rect x="314" y="720" width="1" height="3" fill="#000"/><rect x="331" y="720" width="1" height="3" fill="#000"/><rect x="266" y="720" width="1" height="3" fill="#000"/><path d="M349 711.5h6.5v-8h2.5v8h7" stroke="#a0a0a0" stroke-width="1" fill="none" /><rect x="370" y="700" width="60" height="24" fill="#fff"/><rect x="370" y="700" width="60" height="1" fill="#808080"/><rect x="370" y="700" width="1" height="24" fill="#808080"/><text x="379.75" y="714" font-family="Liberation Sans,sans-serif" font-weight="bold" font-size="13" fill="#909090" textLength="40.25" lengthAdjust="spacingAndGlyphs">0 dBV</text><path d="M437 713h10l-5-5z" fill="#a0a0a0"/><path d="M462 709h10l-5 5z" fill="#a0a0a0"/><path d="M485 714.5l2.5-8l2.5 8M486 711.5h8M495.5 706.5v7.5h4v-7.5zM495.5 710.5h4" stroke="#fff" stroke-width="1" fill="none" transform="translate(1 1)"/><path d="M485 714.5l2.5-8l2.5 8M486 711.5h8M495.5 706.5v7.5h4v-7.5zM495.5 710.5h4" stroke="#a0a0a0" stroke-width="1" fill="none" /><rect x="507" y="703" width="1" height="19" fill="#808080"/><rect x="508" y="703" width="1" height="19" fill="#fff"/><rect x="538" y="703" width="1" height="19" fill="#808080"/><rect x="539" y="703" width="1" height="19" fill="#fff"/><rect x="594" y="703" width="1" height="19" fill="#808080"/><rect x="595" y="703" width="1" height="19" fill="#fff"/><rect x="830" y="703" width="1" height="19" fill="#808080"/><rect x="831" y="703" width="1" height="19" fill="#fff"/><rect x="911" y="703" width="1" height="19" fill="#808080"/><rect x="912" y="703" width="1" height="19" fill="#fff"/><path d="M516 711.5l4-3.5l5 4l4.5-3.5" stroke="#000060" stroke-width="2.4" fill="none" /><path d="M520.5 704l2.5 1.5l2.5-1.5M520.5 719l2.5-1.5l2.5 1.5" stroke="#000060" stroke-width="1.1" fill="none" /><rect x="522" y="704" width="2" height="2" fill="#000060"/><rect x="522" y="717" width="2" height="2" fill="#000060"/><path d="M547 712.5q0-5 6-5M558 714q0 5-6 5" stroke="#000" stroke-width="1.4" fill="none" /><path d="M551.5 705l3 2.5l-3 2.5z" fill="#000"/><path d="M553.5 716.5l-3 2.5l3 2.5z" fill="#000"/><path d="M556.5 711.5v-5l1.5-2l1.5 2v5z" stroke="#000" stroke-width="1" fill="none" /><rect x="569" y="700" width="22" height="24" fill="url(#dith)"/><rect x="569" y="700" width="22" height="1" fill="#808080"/><rect x="569" y="700" width="1" height="24" fill="#808080"/><rect x="569" y="723" width="22" height="1" fill="#fff"/><rect x="590" y="700" width="1" height="24" fill="#fff"/><path d="M574 714.5q0-5 6-5M584 716q0 5-6 5" stroke="#909090" stroke-width="1.4" fill="none" /><path d="M578.5 707l3 2.5l-3 2.5z" fill="#909090"/><path d="M580.5 718.5l-3 2.5l3 2.5z" fill="#909090"/><rect x="582.5" y="703.5" width="5" height="8" fill="#e8e8e8" stroke="#909090"/><rect x="583" y="707" width="4" height="1" fill="#909090"/><text x="604" y="713" font-family="Liberation Sans,sans-serif" font-weight="bold" font-size="13" fill="#000" textLength="23" lengthAdjust="spacingAndGlyphs">Out</text><rect x="632" y="700" width="82" height="24" fill="#fff"/><rect x="632" y="700" width="82" height="1" fill="#808080"/><rect x="632" y="700" width="1" height="24" fill="#808080"/><text x="648" y="714" font-family="Liberation Sans,sans-serif" font-weight="bold" font-size="13" fill="#000" textLength="49.3" lengthAdjust="spacingAndGlyphs">0.0 dBu</text><path d="M721 709h10l-5 5z" fill="#000"/><path d="M746 713h10l-5-5z" fill="#000"/><path d="M768.5 709.5h3l5-5v14l-5-5h-3z" fill="#d4d0c8" stroke="#000"/><path d="M778 706v12" stroke="#404040" stroke-width="1" fill="none" /><path d="M793 710h5l-2.5 3z" fill="#000"/><rect x="807" y="709" width="15" height="2" fill="#000"/><rect x="807" y="713" width="4" height="2" fill="#000"/><rect x="813" y="713" width="4" height="2" fill="#000"/><rect x="819" y="713" width="3" height="2" fill="#000"/><rect x="833" y="700" width="25" height="24" fill="url(#dith)"/><rect x="833" y="700" width="25" height="1" fill="#808080"/><rect x="833" y="700" width="1" height="24" fill="#808080"/><rect x="833" y="723" width="25" height="1" fill="#fff"/><rect x="857" y="700" width="1" height="24" fill="#fff"/><circle cx="842.5" cy="707" r="3" fill="#00e000" stroke="#000" stroke-width="1"/><rect x="841" y="710" width="2" height="7" fill="#000"/><path d="M842.5 717v1.5h7.5v-4" stroke="#000" stroke-width="1.2" fill="none" /><path d="M848.0 713.5v-2M852.0 713.5v-2" stroke="#000" stroke-width="1" fill="none" /><rect x="847" y="713" width="6" height="2" fill="#000"/><circle cx="866.5" cy="707" r="3" fill="#ff0000" stroke="#000" stroke-width="1"/><rect x="865" y="710" width="2" height="7" fill="#000"/><path d="M866.5 717v1.5h7.5v-4" stroke="#000" stroke-width="1.2" fill="none" /><path d="M872.0 713.5v-2M876.0 713.5v-2" stroke="#000" stroke-width="1" fill="none" /><rect x="871" y="713" width="6" height="2" fill="#000"/><path d="M849.5 711.5v-5l2-2l2 2v5z" fill="#fff" stroke="#404040"/><rect x="873.5" y="703.5" width="5" height="8" fill="#e0e0e0" stroke="#000"/><rect x="874" y="707" width="4" height="1" fill="#000"/><path d="M889.5 705.5h5l1 1h7v12h-13z" fill="#ffff80" stroke="#000" stroke-width="1"/><path d="M889.5 706.5h13" stroke="#000" stroke-width="1" fill="none" /><path d="M892 709l2 2l4-4M894 714l2 2l4-4" stroke="#000" stroke-width="1.6" fill="none" /><circle cx="889" cy="714" r="1.8" fill="#d4d0c8" stroke="#000"/><rect x="888" y="716" width="2" height="6" fill="#000"/><rect x="918.5" y="707.5" width="15" height="7" fill="#e8e8e8" stroke="#000"/><rect x="919" y="708" width="14" height="1" fill="#808080"/><rect x="921" y="710" width="3" height="3" fill="#fff"/><rect x="924" y="710" width="2" height="4" fill="#d00000"/><rect x="927" y="710" width="3" height="3" fill="#fff"/><rect x="920" y="713" width="12" height="1" fill="#ff8080"/><path d="M944.5 716.5v-8l2-2.5h10v10.5z" fill="#f0f0f0" stroke="#000"/><rect x="945" y="706" width="11" height="4" fill="#606040"/><rect x="950" y="707" width="2" height="2" fill="#fff"/><rect x="946" y="713" width="2" height="1" fill="#404040"/><rect x="949" y="713" width="2" height="1" fill="#404040"/><rect x="952" y="713" width="2" height="1" fill="#404040"/><g transform="translate(23.5 16.5) scale(0.9 1)"><text x="0" y="0" fill="#fff" font-size="11" text-anchor="start" font-family="Liberation Sans, sans-serif" font-weight="bold" textLength="441.7" lengthAdjust="spacing" >CLIO - ELECTRICAL &amp; ACOUSTICAL TESTS - [MLS - Frequency Response]</text></g><text x="29.5" y="35.5" fill="#000" font-size="11.5" text-anchor="start" font-family="Liberation Sans, sans-serif" textLength="15.5" lengthAdjust="spacingAndGlyphs" >File</text><rect x="29" y="37" width="5" height="1" fill="#000"/><text x="58" y="35.5" fill="#000" font-size="11.5" text-anchor="start" font-family="Liberation Sans, sans-serif" textLength="38" lengthAdjust="spacingAndGlyphs" >Analysis</text><rect x="58" y="37" width="7" height="1" fill="#000"/><text x="108.75" y="35.5" fill="#000" font-size="11.5" text-anchor="start" font-family="Liberation Sans, sans-serif" textLength="39.25" lengthAdjust="spacingAndGlyphs" >Controls</text><rect x="108" y="37" width="7" height="1" fill="#000"/><text x="161" y="35.5" fill="#000" font-size="11.5" text-anchor="start" font-family="Liberation Sans, sans-serif" textLength="37" lengthAdjust="spacingAndGlyphs" >Window</text><rect x="161" y="37" width="10" height="1" fill="#000"/><text x="210.5" y="35.5" fill="#000" font-size="11.5" text-anchor="start" font-family="Liberation Sans, sans-serif" textLength="20.5" lengthAdjust="spacingAndGlyphs" >Help</text><rect x="210" y="37" width="7" height="1" fill="#000"/><text x="6" y="691" fill="#000" font-size="11.5" text-anchor="start" font-family="Liberation Sans, sans-serif" textLength="45" lengthAdjust="spacingAndGlyphs" >Filename:</text><text x="208" y="691" fill="#000" font-size="11.5" text-anchor="start" font-family="Liberation Sans, sans-serif" textLength="23.5" lengthAdjust="spacingAndGlyphs" >CH A</text><text x="240" y="691" fill="#000" font-size="11.5" text-anchor="start" font-family="Liberation Sans, sans-serif" textLength="28.75" lengthAdjust="spacingAndGlyphs" >dBSPL</text><text x="279" y="691" fill="#000" font-size="11.5" text-anchor="start" font-family="Liberation Sans, sans-serif" textLength="59" lengthAdjust="spacingAndGlyphs" >1/12 Octave</text><text x="347.5" y="691" fill="#000" font-size="11.5" text-anchor="start" font-family="Liberation Sans, sans-serif" textLength="28.5" lengthAdjust="spacingAndGlyphs" >48kHz</text><text x="385" y="691" fill="#000" font-size="11.5" text-anchor="start" font-family="Liberation Sans, sans-serif" textLength="12" lengthAdjust="spacingAndGlyphs" >8K</text><text x="406" y="691" fill="#000" font-size="11.5" text-anchor="start" font-family="Liberation Sans, sans-serif" textLength="57.75" lengthAdjust="spacingAndGlyphs" >Rectangular</text><text x="474" y="691" fill="#000" font-size="11.5" text-anchor="start" font-family="Liberation Sans, sans-serif" textLength="61" lengthAdjust="spacingAndGlyphs" >Start 0.00ms</text><text x="547.5" y="691" fill="#000" font-size="11.5" text-anchor="start" font-family="Liberation Sans, sans-serif" textLength="71.5" lengthAdjust="spacingAndGlyphs" >Stop 170.65ms</text><text x="631" y="691" fill="#000" font-size="11.5" text-anchor="start" font-family="Liberation Sans, sans-serif" textLength="72" lengthAdjust="spacingAndGlyphs" >FreqLO 5.86Hz</text><text x="715" y="691" fill="#000" font-size="11.5" text-anchor="start" font-family="Liberation Sans, sans-serif" textLength="83" lengthAdjust="spacingAndGlyphs" >Length 170.65ms</text></svg>
</body></html>
